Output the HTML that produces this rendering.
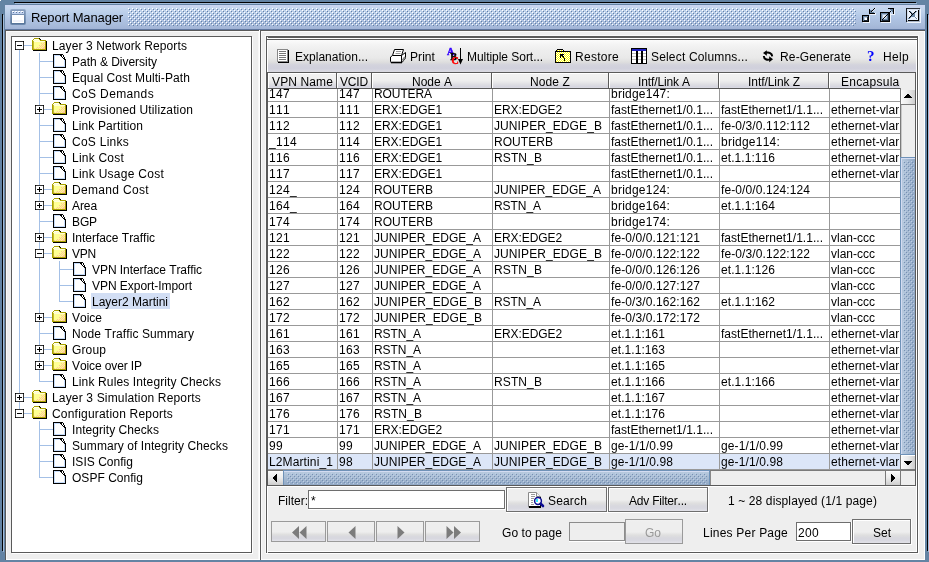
<!DOCTYPE html>
<html><head><meta charset="utf-8"><title>Report Manager</title>
<style>
html,body{margin:0;padding:0}
body{width:929px;height:562px;overflow:hidden;position:relative;background:#eee;font:12px/14px "Liberation Sans",sans-serif;color:#000;font-kerning:none}
div{position:absolute;box-sizing:border-box}
svg{position:absolute;overflow:visible}
.t{white-space:nowrap;height:14px;line-height:14px}
.c{white-space:nowrap;height:14px;line-height:14px;overflow:hidden}
.btn{border:1px solid #7a7a7a;background:linear-gradient(#fdfdfd 0%,#efefef 45%,#dcdce4 80%,#d2d2da 92%,#e4e4e8 100%);text-align:center}
.dis{border-color:#9c9c9c;color:#999}
</style></head><body><div id="root" style="left:0;top:0;width:929px;height:562px;overflow:hidden;will-change:transform">

<div style="left:0px;top:0px;width:930px;height:565px;border:5px solid #6484a4"></div>
<div style="left:14px;top:2px;width:902px;height:1px;background:#000"></div>
<div style="left:15px;top:3px;width:902px;height:1px;background:#a3bbd8"></div>
<div style="left:2px;top:14px;width:1px;height:537px;background:#000"></div>
<div style="left:3px;top:15px;width:1px;height:537px;background:#a3bbd8"></div>
<div style="left:927px;top:14px;width:1px;height:537px;background:#000"></div>
<div style="left:928px;top:15px;width:1px;height:537px;background:#a3bbd8"></div>
<div style="left:0px;top:0px;width:1px;height:1px;background:#fff"></div>
<div style="left:5px;top:5px;width:920px;height:25px;background:linear-gradient(#ccd4f2 0%,#c5d7ee 12%,#b6cbe8 40%,#adc1e1 60%,#a9bddc 76%,#a2b4d6 95.9%,#5f779f 96%,#5f779f 100%)"></div>
<div style="left:5px;top:30px;width:920px;height:1px;background:#5a5a5a"></div>
<svg style="left:128px;top:8px" width="728" height="18" shape-rendering="crispEdges"><defs><pattern id="bp" width="4" height="4" patternUnits="userSpaceOnUse"><rect x="0" y="0" width="1" height="1" fill="#fff"/><rect x="2" y="2" width="1" height="1" fill="#fff"/><rect x="1" y="1" width="1" height="1" fill="#6480a4"/><rect x="3" y="3" width="1" height="1" fill="#6480a4"/></pattern></defs><rect width="728" height="18" fill="url(#bp)"/></svg>
<svg style="left:10px;top:9px" width="16" height="16" shape-rendering="crispEdges"><defs><linearGradient id="tig" x1="0" y1="0" x2="0" y2="1"><stop offset="0" stop-color="#869dbd"/><stop offset="1" stop-color="#56749a"/></linearGradient></defs><rect x="0" y="0" width="16" height="16" rx="2" fill="url(#tig)" shape-rendering="auto" opacity=".75"/><rect x="1" y="1" width="14" height="14" fill="url(#tig)"/><rect x="2" y="2" width="12" height="3" fill="#c2d2ee"/><g fill="#fff"><rect x="2" y="2" width="2" height="1"/><rect x="5" y="2" width="2" height="1"/><rect x="8" y="2" width="2" height="1"/><rect x="11" y="2" width="2" height="1"/></g><g fill="#5f7b9f"><rect x="3" y="3" width="1" height="1"/><rect x="6" y="3" width="1" height="1"/><rect x="9" y="3" width="1" height="1"/><rect x="12" y="3" width="1" height="1"/></g><rect x="2" y="6" width="12" height="8" fill="#fff"/><rect x="3" y="11" width="10" height="2" fill="#f0f2fb"/></svg>
<div class="t" style="left:31px;top:10px;font-size:13px;height:15px;line-height:15px;letter-spacing:-0.138px">Report Manager</div>
<svg style="left:0;top:0" width="929" height="30" shape-rendering="crispEdges"><rect x="862" y="15" width="7" height="7" fill="#000"/><rect x="863" y="16" width="5" height="5" fill="#66829f"/><rect x="864" y="17" width="3" height="3" fill="#b9cadf"/><rect x="865" y="18" width="2" height="2" fill="#fff"/><rect x="867" y="17" width="1" height="4" fill="#1c2836"/><rect x="864" y="20" width="4" height="1" fill="#1c2836"/><rect x="863" y="22" width="7" height="1" fill="#eef3fb"/><rect x="869" y="16" width="1" height="7" fill="#eef3fb"/><rect x="869" y="9" width="1" height="5" fill="#000"/><rect x="869" y="13" width="6" height="1" fill="#000"/><rect x="870" y="10" width="2" height="1" fill="#5f7b98"/><rect x="870" y="11" width="3" height="1" fill="#5f7b98"/><rect x="870" y="12" width="4" height="1" fill="#5f7b98"/><rect x="871" y="11" width="1" height="1" fill="#000"/><rect x="872" y="10" width="1" height="1" fill="#000"/><rect x="873" y="9" width="1" height="1" fill="#000"/><rect x="874" y="8" width="1" height="1" fill="#000"/><rect x="870" y="14" width="6" height="1" fill="#eef3fb"/><rect x="875" y="13" width="1" height="1" fill="#eef3fb"/><rect x="872" y="11" width="1" height="1" fill="#dfe8f5"/><rect x="873" y="10" width="1" height="1" fill="#dfe8f5"/><rect x="874" y="9" width="1" height="1" fill="#dfe8f5"/><rect x="875" y="8" width="1" height="1" fill="#dfe8f5"/><rect x="880" y="12" width="10" height="10" fill="#000"/><rect x="881" y="13" width="8" height="8" fill="#66829f"/><rect x="882" y="14" width="5" height="5" fill="#a9bdd6"/><rect x="883" y="15" width="3" height="3" fill="#e6eef8"/><rect x="888" y="14" width="1" height="7" fill="#1c2836"/><rect x="882" y="20" width="7" height="1" fill="#1c2836"/><rect x="881" y="22" width="10" height="1" fill="#eef3fb"/><rect x="890" y="13" width="1" height="10" fill="#eef3fb"/><rect x="882" y="19" width="1" height="1" fill="#000"/><rect x="883" y="18" width="1" height="1" fill="#000"/><rect x="884" y="17" width="1" height="1" fill="#000"/><rect x="885" y="16" width="1" height="1" fill="#000"/><rect x="886" y="15" width="1" height="1" fill="#000"/><rect x="887" y="14" width="1" height="1" fill="#000"/><rect x="888" y="13" width="1" height="1" fill="#000"/><rect x="889" y="12" width="1" height="1" fill="#000"/><rect x="890" y="11" width="1" height="1" fill="#000"/><rect x="891" y="10" width="1" height="1" fill="#000"/><rect x="892" y="9" width="1" height="1" fill="#000"/><rect x="884" y="18" width="1" height="1" fill="#dfe8f5"/><rect x="885" y="17" width="1" height="1" fill="#dfe8f5"/><rect x="886" y="16" width="1" height="1" fill="#dfe8f5"/><rect x="888" y="8" width="6" height="1" fill="#000"/><rect x="893" y="8" width="1" height="6" fill="#000"/><rect x="890" y="9" width="3" height="1" fill="#5f7b98"/><rect x="891" y="10" width="2" height="1" fill="#5f7b98"/><rect x="892" y="11" width="1" height="1" fill="#5f7b98"/><rect x="894" y="9" width="1" height="6" fill="#eef3fb"/><rect x="891" y="14" width="3" height="1" fill="#eef3fb"/><rect x="906" y="8" width="14" height="14" fill="#a8b4c6"/><rect x="906" y="8" width="14" height="1" fill="#2a2e36"/><rect x="906" y="8" width="1" height="14" fill="#14181e"/><rect x="907" y="9" width="12" height="12" fill="#d2deee"/><rect x="908" y="10" width="10" height="10" fill="#e9f0fa"/><rect x="918" y="10" width="1" height="11" fill="#000"/><rect x="908" y="20" width="11" height="1" fill="#000"/><rect x="907" y="22" width="14" height="1" fill="#eef3fb"/><rect x="920" y="9" width="1" height="14" fill="#eef3fb"/><rect x="909" y="11" width="2" height="1" fill="#6a86a3"/><rect x="915" y="11" width="2" height="1" fill="#6a86a3"/><rect x="910" y="12" width="2" height="1" fill="#6a86a3"/><rect x="914" y="12" width="2" height="1" fill="#6a86a3"/><rect x="911" y="13" width="2" height="1" fill="#6a86a3"/><rect x="913" y="13" width="2" height="1" fill="#6a86a3"/><rect x="912" y="14" width="2" height="1" fill="#6a86a3"/><rect x="912" y="14" width="2" height="1" fill="#6a86a3"/><rect x="913" y="15" width="2" height="1" fill="#6a86a3"/><rect x="911" y="15" width="2" height="1" fill="#6a86a3"/><rect x="914" y="16" width="2" height="1" fill="#6a86a3"/><rect x="910" y="16" width="2" height="1" fill="#6a86a3"/><rect x="915" y="17" width="2" height="1" fill="#6a86a3"/><rect x="909" y="17" width="2" height="1" fill="#6a86a3"/><rect x="916" y="18" width="2" height="1" fill="#6a86a3"/><rect x="908" y="18" width="2" height="1" fill="#6a86a3"/><rect x="911" y="13" width="4" height="4" fill="#6a86a3"/><rect x="909" y="11" width="1" height="1" fill="#000"/><rect x="910" y="12" width="1" height="1" fill="#000"/><rect x="911" y="13" width="1" height="1" fill="#000"/><rect x="912" y="14" width="1" height="1" fill="#000"/><rect x="915" y="11" width="1" height="1" fill="#000"/><rect x="914" y="12" width="1" height="1" fill="#000"/><rect x="913" y="13" width="1" height="1" fill="#000"/><rect x="912" y="14" width="1" height="1" fill="#000"/><rect x="911" y="15" width="1" height="1" fill="#000"/><rect x="910" y="16" width="1" height="1" fill="#000"/><rect x="909" y="17" width="1" height="1" fill="#000"/><rect x="915" y="16" width="1" height="1" fill="#fff"/><rect x="916" y="17" width="1" height="1" fill="#fff"/><rect x="917" y="18" width="1" height="1" fill="#fff"/></svg>
<div style="left:5px;top:30px;width:1px;height:530px;background:#5a5a5a"></div>
<div style="left:6px;top:31px;width:1px;height:529px;background:#fafafa"></div>
<div style="left:6px;top:31px;width:252px;height:1px;background:#fafafa"></div>
<div style="left:258px;top:31px;width:1px;height:529px;background:#f8f8f8"></div>
<div style="left:259px;top:30px;width:1px;height:530px;background:#fff"></div>
<div style="left:260px;top:30px;width:1px;height:530px;background:#5a5a5a"></div>
<div style="left:261px;top:31px;width:1px;height:529px;background:#fafafa"></div>
<div style="left:261px;top:31px;width:664px;height:1px;background:#fafafa"></div>
<div style="left:924px;top:31px;width:1px;height:529px;background:#fff"></div>
<div style="left:6px;top:559px;width:919px;height:1px;background:#fff"></div>
<div style="left:260px;top:30px;width:1px;height:530px;background:#5a5a5a"></div>
<div style="left:11px;top:36px;width:241px;height:517px;border:1px solid #5a5a5a;background:#fff"></div>
<div style="left:252px;top:37px;width:1px;height:517px;background:#fff"></div>
<div style="left:12px;top:553px;width:241px;height:1px;background:#fff"></div>
<div style="left:19px;top:50px;width:1px;height:359px;background:#a4c0e6"></div>
<div style="left:39px;top:53px;width:1px;height:329px;background:#a4c0e6"></div>
<div style="left:59px;top:261px;width:1px;height:41px;background:#a4c0e6"></div>
<div style="left:39px;top:421px;width:1px;height:57px;background:#a4c0e6"></div>
<div style="left:24px;top:45px;width:8px;height:1px;background:#a4c0e6"></div>
<svg style="left:15px;top:41px" width="9" height="9" shape-rendering="crispEdges"><rect x="0" y="0" width="9" height="9" fill="#383838"/><rect x="1" y="1" width="7" height="7" fill="#fff"/><rect x="0" y="0" width="1" height="1" fill="#000"/><rect x="8" y="0" width="1" height="1" fill="#000"/><rect x="0" y="8" width="1" height="1" fill="#000"/><rect x="8" y="8" width="1" height="1" fill="#000"/><rect x="2" y="4" width="5" height="1" fill="#000"/></svg>
<svg style="left:32px;top:38px" width="15" height="13" shape-rendering="crispEdges"><rect x="2" y="0" width="5" height="1" fill="#aaa200"/><rect x="7" y="0" width="1" height="1" fill="#000"/><rect x="8" y="1" width="1" height="1" fill="#000"/><rect x="1" y="1" width="1" height="1" fill="#aaa200"/><rect x="2" y="1" width="5" height="1" fill="#fffff0"/><rect x="7" y="1" width="1" height="1" fill="#aaa200"/><rect x="0" y="2" width="14" height="1" fill="#aaa200"/><rect x="1" y="2" width="7" height="1" fill="#ffffc8"/><rect x="0" y="3" width="14" height="9" fill="#aaa200"/><rect x="1" y="3" width="1" height="8" fill="#c4bc30"/><rect x="2" y="3" width="11" height="8" fill="#ffff94"/><rect x="2" y="3" width="11" height="1" fill="#ffffd8"/><rect x="14" y="3" width="1" height="9" fill="#000"/><rect x="1" y="12" width="14" height="1" fill="#000"/><rect x="12" y="4" width="1" height="1" fill="#ffc896"/><rect x="9" y="5" width="1" height="1" fill="#ffc896"/><rect x="11" y="5" width="1" height="1" fill="#ffc896"/><rect x="10" y="6" width="1" height="1" fill="#ffc896"/><rect x="12" y="6" width="1" height="1" fill="#ffc896"/><rect x="7" y="7" width="1" height="1" fill="#ffc896"/><rect x="9" y="7" width="1" height="1" fill="#ffc896"/><rect x="11" y="7" width="1" height="1" fill="#ffc896"/><rect x="8" y="8" width="1" height="1" fill="#ffc896"/><rect x="10" y="8" width="1" height="1" fill="#ffc896"/><rect x="12" y="8" width="1" height="1" fill="#ffc896"/><rect x="5" y="9" width="1" height="1" fill="#ffc896"/><rect x="7" y="9" width="1" height="1" fill="#ffc896"/><rect x="9" y="9" width="1" height="1" fill="#ffc896"/><rect x="11" y="9" width="1" height="1" fill="#ffc896"/><rect x="12" y="9" width="1" height="1" fill="#ffc896"/><rect x="2" y="10" width="1" height="1" fill="#ffc896"/><rect x="4" y="10" width="1" height="1" fill="#ffc896"/><rect x="6" y="10" width="1" height="1" fill="#ffc896"/><rect x="8" y="10" width="1" height="1" fill="#ffc896"/><rect x="10" y="10" width="1" height="1" fill="#ffc896"/><rect x="11" y="10" width="1" height="1" fill="#ffc896"/><rect x="12" y="10" width="1" height="1" fill="#ffc896"/></svg>
<div class="t" style="left:52px;top:39px;letter-spacing:0.099px;">Layer 3 Network Reports</div>
<div style="left:39px;top:61px;width:14px;height:1px;background:#a4c0e6"></div>
<svg style="left:53px;top:54px" width="13" height="14" shape-rendering="crispEdges"><path d="M0 0 H10 L13 5 V14 H0 Z" fill="#fff"/><rect x="1" y="1" width="1" height="12" fill="#c6dcfa"/><rect x="1" y="12" width="11" height="1" fill="#c6dcfa"/><rect x="1" y="1" width="7" height="1" fill="#c6dcfa"/><rect x="11" y="6" width="1" height="7" fill="#c6dcfa"/><rect x="0" y="0" width="10" height="1" fill="#000"/><rect x="0" y="0" width="1" height="14" fill="#000"/><rect x="0" y="13" width="13" height="1" fill="#000"/><rect x="12" y="6" width="1" height="8" fill="#000"/><rect x="10" y="1" width="1" height="1" fill="#000"/><rect x="10" y="2" width="1" height="1" fill="#000"/><rect x="11" y="3" width="1" height="1" fill="#000"/><rect x="11" y="4" width="1" height="1" fill="#000"/><rect x="12" y="5" width="1" height="1" fill="#000"/><rect x="7" y="1" width="1" height="1" fill="#000"/><rect x="8" y="2" width="1" height="1" fill="#000"/><rect x="9" y="3" width="1" height="1" fill="#000"/><rect x="10" y="4" width="1" height="1" fill="#000"/><rect x="11" y="5" width="1" height="1" fill="#000"/><rect x="8" y="1" width="1" height="1" fill="#000"/></svg>
<div class="t" style="left:72px;top:55px;letter-spacing:-0.022px;">Path &amp; Diversity</div>
<div style="left:39px;top:77px;width:14px;height:1px;background:#a4c0e6"></div>
<svg style="left:53px;top:70px" width="13" height="14" shape-rendering="crispEdges"><path d="M0 0 H10 L13 5 V14 H0 Z" fill="#fff"/><rect x="1" y="1" width="1" height="12" fill="#c6dcfa"/><rect x="1" y="12" width="11" height="1" fill="#c6dcfa"/><rect x="1" y="1" width="7" height="1" fill="#c6dcfa"/><rect x="11" y="6" width="1" height="7" fill="#c6dcfa"/><rect x="0" y="0" width="10" height="1" fill="#000"/><rect x="0" y="0" width="1" height="14" fill="#000"/><rect x="0" y="13" width="13" height="1" fill="#000"/><rect x="12" y="6" width="1" height="8" fill="#000"/><rect x="10" y="1" width="1" height="1" fill="#000"/><rect x="10" y="2" width="1" height="1" fill="#000"/><rect x="11" y="3" width="1" height="1" fill="#000"/><rect x="11" y="4" width="1" height="1" fill="#000"/><rect x="12" y="5" width="1" height="1" fill="#000"/><rect x="7" y="1" width="1" height="1" fill="#000"/><rect x="8" y="2" width="1" height="1" fill="#000"/><rect x="9" y="3" width="1" height="1" fill="#000"/><rect x="10" y="4" width="1" height="1" fill="#000"/><rect x="11" y="5" width="1" height="1" fill="#000"/><rect x="8" y="1" width="1" height="1" fill="#000"/></svg>
<div class="t" style="left:72px;top:71px;letter-spacing:0.093px;">Equal Cost Multi-Path</div>
<div style="left:39px;top:93px;width:14px;height:1px;background:#a4c0e6"></div>
<svg style="left:53px;top:86px" width="13" height="14" shape-rendering="crispEdges"><path d="M0 0 H10 L13 5 V14 H0 Z" fill="#fff"/><rect x="1" y="1" width="1" height="12" fill="#c6dcfa"/><rect x="1" y="12" width="11" height="1" fill="#c6dcfa"/><rect x="1" y="1" width="7" height="1" fill="#c6dcfa"/><rect x="11" y="6" width="1" height="7" fill="#c6dcfa"/><rect x="0" y="0" width="10" height="1" fill="#000"/><rect x="0" y="0" width="1" height="14" fill="#000"/><rect x="0" y="13" width="13" height="1" fill="#000"/><rect x="12" y="6" width="1" height="8" fill="#000"/><rect x="10" y="1" width="1" height="1" fill="#000"/><rect x="10" y="2" width="1" height="1" fill="#000"/><rect x="11" y="3" width="1" height="1" fill="#000"/><rect x="11" y="4" width="1" height="1" fill="#000"/><rect x="12" y="5" width="1" height="1" fill="#000"/><rect x="7" y="1" width="1" height="1" fill="#000"/><rect x="8" y="2" width="1" height="1" fill="#000"/><rect x="9" y="3" width="1" height="1" fill="#000"/><rect x="10" y="4" width="1" height="1" fill="#000"/><rect x="11" y="5" width="1" height="1" fill="#000"/><rect x="8" y="1" width="1" height="1" fill="#000"/></svg>
<div class="t" style="left:72px;top:87px;letter-spacing:0.36px;">CoS Demands</div>
<div style="left:44px;top:109px;width:8px;height:1px;background:#a4c0e6"></div>
<svg style="left:35px;top:105px" width="9" height="9" shape-rendering="crispEdges"><rect x="0" y="0" width="9" height="9" fill="#383838"/><rect x="1" y="1" width="7" height="7" fill="#fff"/><rect x="0" y="0" width="1" height="1" fill="#000"/><rect x="8" y="0" width="1" height="1" fill="#000"/><rect x="0" y="8" width="1" height="1" fill="#000"/><rect x="8" y="8" width="1" height="1" fill="#000"/><rect x="2" y="4" width="5" height="1" fill="#000"/><rect x="4" y="2" width="1" height="5" fill="#000"/></svg>
<svg style="left:52px;top:102px" width="15" height="13" shape-rendering="crispEdges"><rect x="2" y="0" width="5" height="1" fill="#aaa200"/><rect x="7" y="0" width="1" height="1" fill="#000"/><rect x="8" y="1" width="1" height="1" fill="#000"/><rect x="1" y="1" width="1" height="1" fill="#aaa200"/><rect x="2" y="1" width="5" height="1" fill="#fffff0"/><rect x="7" y="1" width="1" height="1" fill="#aaa200"/><rect x="0" y="2" width="14" height="1" fill="#aaa200"/><rect x="1" y="2" width="7" height="1" fill="#ffffc8"/><rect x="0" y="3" width="14" height="9" fill="#aaa200"/><rect x="1" y="3" width="1" height="8" fill="#c4bc30"/><rect x="2" y="3" width="11" height="8" fill="#ffff94"/><rect x="2" y="3" width="11" height="1" fill="#ffffd8"/><rect x="14" y="3" width="1" height="9" fill="#000"/><rect x="1" y="12" width="14" height="1" fill="#000"/><rect x="12" y="4" width="1" height="1" fill="#ffc896"/><rect x="9" y="5" width="1" height="1" fill="#ffc896"/><rect x="11" y="5" width="1" height="1" fill="#ffc896"/><rect x="10" y="6" width="1" height="1" fill="#ffc896"/><rect x="12" y="6" width="1" height="1" fill="#ffc896"/><rect x="7" y="7" width="1" height="1" fill="#ffc896"/><rect x="9" y="7" width="1" height="1" fill="#ffc896"/><rect x="11" y="7" width="1" height="1" fill="#ffc896"/><rect x="8" y="8" width="1" height="1" fill="#ffc896"/><rect x="10" y="8" width="1" height="1" fill="#ffc896"/><rect x="12" y="8" width="1" height="1" fill="#ffc896"/><rect x="5" y="9" width="1" height="1" fill="#ffc896"/><rect x="7" y="9" width="1" height="1" fill="#ffc896"/><rect x="9" y="9" width="1" height="1" fill="#ffc896"/><rect x="11" y="9" width="1" height="1" fill="#ffc896"/><rect x="12" y="9" width="1" height="1" fill="#ffc896"/><rect x="2" y="10" width="1" height="1" fill="#ffc896"/><rect x="4" y="10" width="1" height="1" fill="#ffc896"/><rect x="6" y="10" width="1" height="1" fill="#ffc896"/><rect x="8" y="10" width="1" height="1" fill="#ffc896"/><rect x="10" y="10" width="1" height="1" fill="#ffc896"/><rect x="11" y="10" width="1" height="1" fill="#ffc896"/><rect x="12" y="10" width="1" height="1" fill="#ffc896"/></svg>
<div class="t" style="left:72px;top:103px;letter-spacing:0.128px;">Provisioned Utilization</div>
<div style="left:39px;top:125px;width:14px;height:1px;background:#a4c0e6"></div>
<svg style="left:53px;top:118px" width="13" height="14" shape-rendering="crispEdges"><path d="M0 0 H10 L13 5 V14 H0 Z" fill="#fff"/><rect x="1" y="1" width="1" height="12" fill="#c6dcfa"/><rect x="1" y="12" width="11" height="1" fill="#c6dcfa"/><rect x="1" y="1" width="7" height="1" fill="#c6dcfa"/><rect x="11" y="6" width="1" height="7" fill="#c6dcfa"/><rect x="0" y="0" width="10" height="1" fill="#000"/><rect x="0" y="0" width="1" height="14" fill="#000"/><rect x="0" y="13" width="13" height="1" fill="#000"/><rect x="12" y="6" width="1" height="8" fill="#000"/><rect x="10" y="1" width="1" height="1" fill="#000"/><rect x="10" y="2" width="1" height="1" fill="#000"/><rect x="11" y="3" width="1" height="1" fill="#000"/><rect x="11" y="4" width="1" height="1" fill="#000"/><rect x="12" y="5" width="1" height="1" fill="#000"/><rect x="7" y="1" width="1" height="1" fill="#000"/><rect x="8" y="2" width="1" height="1" fill="#000"/><rect x="9" y="3" width="1" height="1" fill="#000"/><rect x="10" y="4" width="1" height="1" fill="#000"/><rect x="11" y="5" width="1" height="1" fill="#000"/><rect x="8" y="1" width="1" height="1" fill="#000"/></svg>
<div class="t" style="left:72px;top:119px;letter-spacing:0.116px;">Link Partition</div>
<div style="left:39px;top:141px;width:14px;height:1px;background:#a4c0e6"></div>
<svg style="left:53px;top:134px" width="13" height="14" shape-rendering="crispEdges"><path d="M0 0 H10 L13 5 V14 H0 Z" fill="#fff"/><rect x="1" y="1" width="1" height="12" fill="#c6dcfa"/><rect x="1" y="12" width="11" height="1" fill="#c6dcfa"/><rect x="1" y="1" width="7" height="1" fill="#c6dcfa"/><rect x="11" y="6" width="1" height="7" fill="#c6dcfa"/><rect x="0" y="0" width="10" height="1" fill="#000"/><rect x="0" y="0" width="1" height="14" fill="#000"/><rect x="0" y="13" width="13" height="1" fill="#000"/><rect x="12" y="6" width="1" height="8" fill="#000"/><rect x="10" y="1" width="1" height="1" fill="#000"/><rect x="10" y="2" width="1" height="1" fill="#000"/><rect x="11" y="3" width="1" height="1" fill="#000"/><rect x="11" y="4" width="1" height="1" fill="#000"/><rect x="12" y="5" width="1" height="1" fill="#000"/><rect x="7" y="1" width="1" height="1" fill="#000"/><rect x="8" y="2" width="1" height="1" fill="#000"/><rect x="9" y="3" width="1" height="1" fill="#000"/><rect x="10" y="4" width="1" height="1" fill="#000"/><rect x="11" y="5" width="1" height="1" fill="#000"/><rect x="8" y="1" width="1" height="1" fill="#000"/></svg>
<div class="t" style="left:72px;top:135px;letter-spacing:0.257px;">CoS Links</div>
<div style="left:39px;top:157px;width:14px;height:1px;background:#a4c0e6"></div>
<svg style="left:53px;top:150px" width="13" height="14" shape-rendering="crispEdges"><path d="M0 0 H10 L13 5 V14 H0 Z" fill="#fff"/><rect x="1" y="1" width="1" height="12" fill="#c6dcfa"/><rect x="1" y="12" width="11" height="1" fill="#c6dcfa"/><rect x="1" y="1" width="7" height="1" fill="#c6dcfa"/><rect x="11" y="6" width="1" height="7" fill="#c6dcfa"/><rect x="0" y="0" width="10" height="1" fill="#000"/><rect x="0" y="0" width="1" height="14" fill="#000"/><rect x="0" y="13" width="13" height="1" fill="#000"/><rect x="12" y="6" width="1" height="8" fill="#000"/><rect x="10" y="1" width="1" height="1" fill="#000"/><rect x="10" y="2" width="1" height="1" fill="#000"/><rect x="11" y="3" width="1" height="1" fill="#000"/><rect x="11" y="4" width="1" height="1" fill="#000"/><rect x="12" y="5" width="1" height="1" fill="#000"/><rect x="7" y="1" width="1" height="1" fill="#000"/><rect x="8" y="2" width="1" height="1" fill="#000"/><rect x="9" y="3" width="1" height="1" fill="#000"/><rect x="10" y="4" width="1" height="1" fill="#000"/><rect x="11" y="5" width="1" height="1" fill="#000"/><rect x="8" y="1" width="1" height="1" fill="#000"/></svg>
<div class="t" style="left:72px;top:151px;letter-spacing:0.22px;">Link Cost</div>
<div style="left:39px;top:173px;width:14px;height:1px;background:#a4c0e6"></div>
<svg style="left:53px;top:166px" width="13" height="14" shape-rendering="crispEdges"><path d="M0 0 H10 L13 5 V14 H0 Z" fill="#fff"/><rect x="1" y="1" width="1" height="12" fill="#c6dcfa"/><rect x="1" y="12" width="11" height="1" fill="#c6dcfa"/><rect x="1" y="1" width="7" height="1" fill="#c6dcfa"/><rect x="11" y="6" width="1" height="7" fill="#c6dcfa"/><rect x="0" y="0" width="10" height="1" fill="#000"/><rect x="0" y="0" width="1" height="14" fill="#000"/><rect x="0" y="13" width="13" height="1" fill="#000"/><rect x="12" y="6" width="1" height="8" fill="#000"/><rect x="10" y="1" width="1" height="1" fill="#000"/><rect x="10" y="2" width="1" height="1" fill="#000"/><rect x="11" y="3" width="1" height="1" fill="#000"/><rect x="11" y="4" width="1" height="1" fill="#000"/><rect x="12" y="5" width="1" height="1" fill="#000"/><rect x="7" y="1" width="1" height="1" fill="#000"/><rect x="8" y="2" width="1" height="1" fill="#000"/><rect x="9" y="3" width="1" height="1" fill="#000"/><rect x="10" y="4" width="1" height="1" fill="#000"/><rect x="11" y="5" width="1" height="1" fill="#000"/><rect x="8" y="1" width="1" height="1" fill="#000"/></svg>
<div class="t" style="left:72px;top:167px;letter-spacing:0.264px;">Link Usage Cost</div>
<div style="left:44px;top:189px;width:8px;height:1px;background:#a4c0e6"></div>
<svg style="left:35px;top:185px" width="9" height="9" shape-rendering="crispEdges"><rect x="0" y="0" width="9" height="9" fill="#383838"/><rect x="1" y="1" width="7" height="7" fill="#fff"/><rect x="0" y="0" width="1" height="1" fill="#000"/><rect x="8" y="0" width="1" height="1" fill="#000"/><rect x="0" y="8" width="1" height="1" fill="#000"/><rect x="8" y="8" width="1" height="1" fill="#000"/><rect x="2" y="4" width="5" height="1" fill="#000"/><rect x="4" y="2" width="1" height="5" fill="#000"/></svg>
<svg style="left:52px;top:182px" width="15" height="13" shape-rendering="crispEdges"><rect x="2" y="0" width="5" height="1" fill="#aaa200"/><rect x="7" y="0" width="1" height="1" fill="#000"/><rect x="8" y="1" width="1" height="1" fill="#000"/><rect x="1" y="1" width="1" height="1" fill="#aaa200"/><rect x="2" y="1" width="5" height="1" fill="#fffff0"/><rect x="7" y="1" width="1" height="1" fill="#aaa200"/><rect x="0" y="2" width="14" height="1" fill="#aaa200"/><rect x="1" y="2" width="7" height="1" fill="#ffffc8"/><rect x="0" y="3" width="14" height="9" fill="#aaa200"/><rect x="1" y="3" width="1" height="8" fill="#c4bc30"/><rect x="2" y="3" width="11" height="8" fill="#ffff94"/><rect x="2" y="3" width="11" height="1" fill="#ffffd8"/><rect x="14" y="3" width="1" height="9" fill="#000"/><rect x="1" y="12" width="14" height="1" fill="#000"/><rect x="12" y="4" width="1" height="1" fill="#ffc896"/><rect x="9" y="5" width="1" height="1" fill="#ffc896"/><rect x="11" y="5" width="1" height="1" fill="#ffc896"/><rect x="10" y="6" width="1" height="1" fill="#ffc896"/><rect x="12" y="6" width="1" height="1" fill="#ffc896"/><rect x="7" y="7" width="1" height="1" fill="#ffc896"/><rect x="9" y="7" width="1" height="1" fill="#ffc896"/><rect x="11" y="7" width="1" height="1" fill="#ffc896"/><rect x="8" y="8" width="1" height="1" fill="#ffc896"/><rect x="10" y="8" width="1" height="1" fill="#ffc896"/><rect x="12" y="8" width="1" height="1" fill="#ffc896"/><rect x="5" y="9" width="1" height="1" fill="#ffc896"/><rect x="7" y="9" width="1" height="1" fill="#ffc896"/><rect x="9" y="9" width="1" height="1" fill="#ffc896"/><rect x="11" y="9" width="1" height="1" fill="#ffc896"/><rect x="12" y="9" width="1" height="1" fill="#ffc896"/><rect x="2" y="10" width="1" height="1" fill="#ffc896"/><rect x="4" y="10" width="1" height="1" fill="#ffc896"/><rect x="6" y="10" width="1" height="1" fill="#ffc896"/><rect x="8" y="10" width="1" height="1" fill="#ffc896"/><rect x="10" y="10" width="1" height="1" fill="#ffc896"/><rect x="11" y="10" width="1" height="1" fill="#ffc896"/><rect x="12" y="10" width="1" height="1" fill="#ffc896"/></svg>
<div class="t" style="left:72px;top:183px;letter-spacing:0.33px;">Demand Cost</div>
<div style="left:44px;top:205px;width:8px;height:1px;background:#a4c0e6"></div>
<svg style="left:35px;top:201px" width="9" height="9" shape-rendering="crispEdges"><rect x="0" y="0" width="9" height="9" fill="#383838"/><rect x="1" y="1" width="7" height="7" fill="#fff"/><rect x="0" y="0" width="1" height="1" fill="#000"/><rect x="8" y="0" width="1" height="1" fill="#000"/><rect x="0" y="8" width="1" height="1" fill="#000"/><rect x="8" y="8" width="1" height="1" fill="#000"/><rect x="2" y="4" width="5" height="1" fill="#000"/><rect x="4" y="2" width="1" height="5" fill="#000"/></svg>
<svg style="left:52px;top:198px" width="15" height="13" shape-rendering="crispEdges"><rect x="2" y="0" width="5" height="1" fill="#aaa200"/><rect x="7" y="0" width="1" height="1" fill="#000"/><rect x="8" y="1" width="1" height="1" fill="#000"/><rect x="1" y="1" width="1" height="1" fill="#aaa200"/><rect x="2" y="1" width="5" height="1" fill="#fffff0"/><rect x="7" y="1" width="1" height="1" fill="#aaa200"/><rect x="0" y="2" width="14" height="1" fill="#aaa200"/><rect x="1" y="2" width="7" height="1" fill="#ffffc8"/><rect x="0" y="3" width="14" height="9" fill="#aaa200"/><rect x="1" y="3" width="1" height="8" fill="#c4bc30"/><rect x="2" y="3" width="11" height="8" fill="#ffff94"/><rect x="2" y="3" width="11" height="1" fill="#ffffd8"/><rect x="14" y="3" width="1" height="9" fill="#000"/><rect x="1" y="12" width="14" height="1" fill="#000"/><rect x="12" y="4" width="1" height="1" fill="#ffc896"/><rect x="9" y="5" width="1" height="1" fill="#ffc896"/><rect x="11" y="5" width="1" height="1" fill="#ffc896"/><rect x="10" y="6" width="1" height="1" fill="#ffc896"/><rect x="12" y="6" width="1" height="1" fill="#ffc896"/><rect x="7" y="7" width="1" height="1" fill="#ffc896"/><rect x="9" y="7" width="1" height="1" fill="#ffc896"/><rect x="11" y="7" width="1" height="1" fill="#ffc896"/><rect x="8" y="8" width="1" height="1" fill="#ffc896"/><rect x="10" y="8" width="1" height="1" fill="#ffc896"/><rect x="12" y="8" width="1" height="1" fill="#ffc896"/><rect x="5" y="9" width="1" height="1" fill="#ffc896"/><rect x="7" y="9" width="1" height="1" fill="#ffc896"/><rect x="9" y="9" width="1" height="1" fill="#ffc896"/><rect x="11" y="9" width="1" height="1" fill="#ffc896"/><rect x="12" y="9" width="1" height="1" fill="#ffc896"/><rect x="2" y="10" width="1" height="1" fill="#ffc896"/><rect x="4" y="10" width="1" height="1" fill="#ffc896"/><rect x="6" y="10" width="1" height="1" fill="#ffc896"/><rect x="8" y="10" width="1" height="1" fill="#ffc896"/><rect x="10" y="10" width="1" height="1" fill="#ffc896"/><rect x="11" y="10" width="1" height="1" fill="#ffc896"/><rect x="12" y="10" width="1" height="1" fill="#ffc896"/></svg>
<div class="t" style="left:72px;top:199px;letter-spacing:-0.087px;">Area</div>
<div style="left:39px;top:221px;width:14px;height:1px;background:#a4c0e6"></div>
<svg style="left:53px;top:214px" width="13" height="14" shape-rendering="crispEdges"><path d="M0 0 H10 L13 5 V14 H0 Z" fill="#fff"/><rect x="1" y="1" width="1" height="12" fill="#c6dcfa"/><rect x="1" y="12" width="11" height="1" fill="#c6dcfa"/><rect x="1" y="1" width="7" height="1" fill="#c6dcfa"/><rect x="11" y="6" width="1" height="7" fill="#c6dcfa"/><rect x="0" y="0" width="10" height="1" fill="#000"/><rect x="0" y="0" width="1" height="14" fill="#000"/><rect x="0" y="13" width="13" height="1" fill="#000"/><rect x="12" y="6" width="1" height="8" fill="#000"/><rect x="10" y="1" width="1" height="1" fill="#000"/><rect x="10" y="2" width="1" height="1" fill="#000"/><rect x="11" y="3" width="1" height="1" fill="#000"/><rect x="11" y="4" width="1" height="1" fill="#000"/><rect x="12" y="5" width="1" height="1" fill="#000"/><rect x="7" y="1" width="1" height="1" fill="#000"/><rect x="8" y="2" width="1" height="1" fill="#000"/><rect x="9" y="3" width="1" height="1" fill="#000"/><rect x="10" y="4" width="1" height="1" fill="#000"/><rect x="11" y="5" width="1" height="1" fill="#000"/><rect x="8" y="1" width="1" height="1" fill="#000"/></svg>
<div class="t" style="left:72px;top:215px;letter-spacing:-0.114px;">BGP</div>
<div style="left:44px;top:237px;width:8px;height:1px;background:#a4c0e6"></div>
<svg style="left:35px;top:233px" width="9" height="9" shape-rendering="crispEdges"><rect x="0" y="0" width="9" height="9" fill="#383838"/><rect x="1" y="1" width="7" height="7" fill="#fff"/><rect x="0" y="0" width="1" height="1" fill="#000"/><rect x="8" y="0" width="1" height="1" fill="#000"/><rect x="0" y="8" width="1" height="1" fill="#000"/><rect x="8" y="8" width="1" height="1" fill="#000"/><rect x="2" y="4" width="5" height="1" fill="#000"/><rect x="4" y="2" width="1" height="5" fill="#000"/></svg>
<svg style="left:52px;top:230px" width="15" height="13" shape-rendering="crispEdges"><rect x="2" y="0" width="5" height="1" fill="#aaa200"/><rect x="7" y="0" width="1" height="1" fill="#000"/><rect x="8" y="1" width="1" height="1" fill="#000"/><rect x="1" y="1" width="1" height="1" fill="#aaa200"/><rect x="2" y="1" width="5" height="1" fill="#fffff0"/><rect x="7" y="1" width="1" height="1" fill="#aaa200"/><rect x="0" y="2" width="14" height="1" fill="#aaa200"/><rect x="1" y="2" width="7" height="1" fill="#ffffc8"/><rect x="0" y="3" width="14" height="9" fill="#aaa200"/><rect x="1" y="3" width="1" height="8" fill="#c4bc30"/><rect x="2" y="3" width="11" height="8" fill="#ffff94"/><rect x="2" y="3" width="11" height="1" fill="#ffffd8"/><rect x="14" y="3" width="1" height="9" fill="#000"/><rect x="1" y="12" width="14" height="1" fill="#000"/><rect x="12" y="4" width="1" height="1" fill="#ffc896"/><rect x="9" y="5" width="1" height="1" fill="#ffc896"/><rect x="11" y="5" width="1" height="1" fill="#ffc896"/><rect x="10" y="6" width="1" height="1" fill="#ffc896"/><rect x="12" y="6" width="1" height="1" fill="#ffc896"/><rect x="7" y="7" width="1" height="1" fill="#ffc896"/><rect x="9" y="7" width="1" height="1" fill="#ffc896"/><rect x="11" y="7" width="1" height="1" fill="#ffc896"/><rect x="8" y="8" width="1" height="1" fill="#ffc896"/><rect x="10" y="8" width="1" height="1" fill="#ffc896"/><rect x="12" y="8" width="1" height="1" fill="#ffc896"/><rect x="5" y="9" width="1" height="1" fill="#ffc896"/><rect x="7" y="9" width="1" height="1" fill="#ffc896"/><rect x="9" y="9" width="1" height="1" fill="#ffc896"/><rect x="11" y="9" width="1" height="1" fill="#ffc896"/><rect x="12" y="9" width="1" height="1" fill="#ffc896"/><rect x="2" y="10" width="1" height="1" fill="#ffc896"/><rect x="4" y="10" width="1" height="1" fill="#ffc896"/><rect x="6" y="10" width="1" height="1" fill="#ffc896"/><rect x="8" y="10" width="1" height="1" fill="#ffc896"/><rect x="10" y="10" width="1" height="1" fill="#ffc896"/><rect x="11" y="10" width="1" height="1" fill="#ffc896"/><rect x="12" y="10" width="1" height="1" fill="#ffc896"/></svg>
<div class="t" style="left:72px;top:231px;letter-spacing:-0.021px;">Interface Traffic</div>
<div style="left:44px;top:253px;width:8px;height:1px;background:#a4c0e6"></div>
<svg style="left:35px;top:249px" width="9" height="9" shape-rendering="crispEdges"><rect x="0" y="0" width="9" height="9" fill="#383838"/><rect x="1" y="1" width="7" height="7" fill="#fff"/><rect x="0" y="0" width="1" height="1" fill="#000"/><rect x="8" y="0" width="1" height="1" fill="#000"/><rect x="0" y="8" width="1" height="1" fill="#000"/><rect x="8" y="8" width="1" height="1" fill="#000"/><rect x="2" y="4" width="5" height="1" fill="#000"/></svg>
<svg style="left:52px;top:246px" width="15" height="13" shape-rendering="crispEdges"><rect x="2" y="0" width="5" height="1" fill="#aaa200"/><rect x="7" y="0" width="1" height="1" fill="#000"/><rect x="8" y="1" width="1" height="1" fill="#000"/><rect x="1" y="1" width="1" height="1" fill="#aaa200"/><rect x="2" y="1" width="5" height="1" fill="#fffff0"/><rect x="7" y="1" width="1" height="1" fill="#aaa200"/><rect x="0" y="2" width="14" height="1" fill="#aaa200"/><rect x="1" y="2" width="7" height="1" fill="#ffffc8"/><rect x="0" y="3" width="14" height="9" fill="#aaa200"/><rect x="1" y="3" width="1" height="8" fill="#c4bc30"/><rect x="2" y="3" width="11" height="8" fill="#ffff94"/><rect x="2" y="3" width="11" height="1" fill="#ffffd8"/><rect x="14" y="3" width="1" height="9" fill="#000"/><rect x="1" y="12" width="14" height="1" fill="#000"/><rect x="12" y="4" width="1" height="1" fill="#ffc896"/><rect x="9" y="5" width="1" height="1" fill="#ffc896"/><rect x="11" y="5" width="1" height="1" fill="#ffc896"/><rect x="10" y="6" width="1" height="1" fill="#ffc896"/><rect x="12" y="6" width="1" height="1" fill="#ffc896"/><rect x="7" y="7" width="1" height="1" fill="#ffc896"/><rect x="9" y="7" width="1" height="1" fill="#ffc896"/><rect x="11" y="7" width="1" height="1" fill="#ffc896"/><rect x="8" y="8" width="1" height="1" fill="#ffc896"/><rect x="10" y="8" width="1" height="1" fill="#ffc896"/><rect x="12" y="8" width="1" height="1" fill="#ffc896"/><rect x="5" y="9" width="1" height="1" fill="#ffc896"/><rect x="7" y="9" width="1" height="1" fill="#ffc896"/><rect x="9" y="9" width="1" height="1" fill="#ffc896"/><rect x="11" y="9" width="1" height="1" fill="#ffc896"/><rect x="12" y="9" width="1" height="1" fill="#ffc896"/><rect x="2" y="10" width="1" height="1" fill="#ffc896"/><rect x="4" y="10" width="1" height="1" fill="#ffc896"/><rect x="6" y="10" width="1" height="1" fill="#ffc896"/><rect x="8" y="10" width="1" height="1" fill="#ffc896"/><rect x="10" y="10" width="1" height="1" fill="#ffc896"/><rect x="11" y="10" width="1" height="1" fill="#ffc896"/><rect x="12" y="10" width="1" height="1" fill="#ffc896"/></svg>
<div class="t" style="left:72px;top:247px;letter-spacing:-0.225px;">VPN</div>
<div style="left:59px;top:269px;width:14px;height:1px;background:#a4c0e6"></div>
<svg style="left:73px;top:262px" width="13" height="14" shape-rendering="crispEdges"><path d="M0 0 H10 L13 5 V14 H0 Z" fill="#fff"/><rect x="1" y="1" width="1" height="12" fill="#c6dcfa"/><rect x="1" y="12" width="11" height="1" fill="#c6dcfa"/><rect x="1" y="1" width="7" height="1" fill="#c6dcfa"/><rect x="11" y="6" width="1" height="7" fill="#c6dcfa"/><rect x="0" y="0" width="10" height="1" fill="#000"/><rect x="0" y="0" width="1" height="14" fill="#000"/><rect x="0" y="13" width="13" height="1" fill="#000"/><rect x="12" y="6" width="1" height="8" fill="#000"/><rect x="10" y="1" width="1" height="1" fill="#000"/><rect x="10" y="2" width="1" height="1" fill="#000"/><rect x="11" y="3" width="1" height="1" fill="#000"/><rect x="11" y="4" width="1" height="1" fill="#000"/><rect x="12" y="5" width="1" height="1" fill="#000"/><rect x="7" y="1" width="1" height="1" fill="#000"/><rect x="8" y="2" width="1" height="1" fill="#000"/><rect x="9" y="3" width="1" height="1" fill="#000"/><rect x="10" y="4" width="1" height="1" fill="#000"/><rect x="11" y="5" width="1" height="1" fill="#000"/><rect x="8" y="1" width="1" height="1" fill="#000"/></svg>
<div class="t" style="left:92px;top:263px;letter-spacing:-0.065px;">VPN Interface Traffic</div>
<div style="left:59px;top:285px;width:14px;height:1px;background:#a4c0e6"></div>
<svg style="left:73px;top:278px" width="13" height="14" shape-rendering="crispEdges"><path d="M0 0 H10 L13 5 V14 H0 Z" fill="#fff"/><rect x="1" y="1" width="1" height="12" fill="#c6dcfa"/><rect x="1" y="12" width="11" height="1" fill="#c6dcfa"/><rect x="1" y="1" width="7" height="1" fill="#c6dcfa"/><rect x="11" y="6" width="1" height="7" fill="#c6dcfa"/><rect x="0" y="0" width="10" height="1" fill="#000"/><rect x="0" y="0" width="1" height="14" fill="#000"/><rect x="0" y="13" width="13" height="1" fill="#000"/><rect x="12" y="6" width="1" height="8" fill="#000"/><rect x="10" y="1" width="1" height="1" fill="#000"/><rect x="10" y="2" width="1" height="1" fill="#000"/><rect x="11" y="3" width="1" height="1" fill="#000"/><rect x="11" y="4" width="1" height="1" fill="#000"/><rect x="12" y="5" width="1" height="1" fill="#000"/><rect x="7" y="1" width="1" height="1" fill="#000"/><rect x="8" y="2" width="1" height="1" fill="#000"/><rect x="9" y="3" width="1" height="1" fill="#000"/><rect x="10" y="4" width="1" height="1" fill="#000"/><rect x="11" y="5" width="1" height="1" fill="#000"/><rect x="8" y="1" width="1" height="1" fill="#000"/></svg>
<div class="t" style="left:92px;top:279px;letter-spacing:-0.041px;">VPN Export-Import</div>
<div style="left:59px;top:301px;width:14px;height:1px;background:#a4c0e6"></div>
<svg style="left:73px;top:294px" width="13" height="14" shape-rendering="crispEdges"><path d="M0 0 H10 L13 5 V14 H0 Z" fill="#fff"/><rect x="1" y="1" width="1" height="12" fill="#c6dcfa"/><rect x="1" y="12" width="11" height="1" fill="#c6dcfa"/><rect x="1" y="1" width="7" height="1" fill="#c6dcfa"/><rect x="11" y="6" width="1" height="7" fill="#c6dcfa"/><rect x="0" y="0" width="10" height="1" fill="#000"/><rect x="0" y="0" width="1" height="14" fill="#000"/><rect x="0" y="13" width="13" height="1" fill="#000"/><rect x="12" y="6" width="1" height="8" fill="#000"/><rect x="10" y="1" width="1" height="1" fill="#000"/><rect x="10" y="2" width="1" height="1" fill="#000"/><rect x="11" y="3" width="1" height="1" fill="#000"/><rect x="11" y="4" width="1" height="1" fill="#000"/><rect x="12" y="5" width="1" height="1" fill="#000"/><rect x="7" y="1" width="1" height="1" fill="#000"/><rect x="8" y="2" width="1" height="1" fill="#000"/><rect x="9" y="3" width="1" height="1" fill="#000"/><rect x="10" y="4" width="1" height="1" fill="#000"/><rect x="11" y="5" width="1" height="1" fill="#000"/><rect x="8" y="1" width="1" height="1" fill="#000"/></svg>
<div style="left:91px;top:293px;width:79px;height:16px;background:#d2def4"></div>
<div class="t" style="left:92px;top:295px;letter-spacing:-0.002px;">Layer2 Martini</div>
<div style="left:44px;top:317px;width:8px;height:1px;background:#a4c0e6"></div>
<svg style="left:35px;top:313px" width="9" height="9" shape-rendering="crispEdges"><rect x="0" y="0" width="9" height="9" fill="#383838"/><rect x="1" y="1" width="7" height="7" fill="#fff"/><rect x="0" y="0" width="1" height="1" fill="#000"/><rect x="8" y="0" width="1" height="1" fill="#000"/><rect x="0" y="8" width="1" height="1" fill="#000"/><rect x="8" y="8" width="1" height="1" fill="#000"/><rect x="2" y="4" width="5" height="1" fill="#000"/><rect x="4" y="2" width="1" height="5" fill="#000"/></svg>
<svg style="left:52px;top:310px" width="15" height="13" shape-rendering="crispEdges"><rect x="2" y="0" width="5" height="1" fill="#aaa200"/><rect x="7" y="0" width="1" height="1" fill="#000"/><rect x="8" y="1" width="1" height="1" fill="#000"/><rect x="1" y="1" width="1" height="1" fill="#aaa200"/><rect x="2" y="1" width="5" height="1" fill="#fffff0"/><rect x="7" y="1" width="1" height="1" fill="#aaa200"/><rect x="0" y="2" width="14" height="1" fill="#aaa200"/><rect x="1" y="2" width="7" height="1" fill="#ffffc8"/><rect x="0" y="3" width="14" height="9" fill="#aaa200"/><rect x="1" y="3" width="1" height="8" fill="#c4bc30"/><rect x="2" y="3" width="11" height="8" fill="#ffff94"/><rect x="2" y="3" width="11" height="1" fill="#ffffd8"/><rect x="14" y="3" width="1" height="9" fill="#000"/><rect x="1" y="12" width="14" height="1" fill="#000"/><rect x="12" y="4" width="1" height="1" fill="#ffc896"/><rect x="9" y="5" width="1" height="1" fill="#ffc896"/><rect x="11" y="5" width="1" height="1" fill="#ffc896"/><rect x="10" y="6" width="1" height="1" fill="#ffc896"/><rect x="12" y="6" width="1" height="1" fill="#ffc896"/><rect x="7" y="7" width="1" height="1" fill="#ffc896"/><rect x="9" y="7" width="1" height="1" fill="#ffc896"/><rect x="11" y="7" width="1" height="1" fill="#ffc896"/><rect x="8" y="8" width="1" height="1" fill="#ffc896"/><rect x="10" y="8" width="1" height="1" fill="#ffc896"/><rect x="12" y="8" width="1" height="1" fill="#ffc896"/><rect x="5" y="9" width="1" height="1" fill="#ffc896"/><rect x="7" y="9" width="1" height="1" fill="#ffc896"/><rect x="9" y="9" width="1" height="1" fill="#ffc896"/><rect x="11" y="9" width="1" height="1" fill="#ffc896"/><rect x="12" y="9" width="1" height="1" fill="#ffc896"/><rect x="2" y="10" width="1" height="1" fill="#ffc896"/><rect x="4" y="10" width="1" height="1" fill="#ffc896"/><rect x="6" y="10" width="1" height="1" fill="#ffc896"/><rect x="8" y="10" width="1" height="1" fill="#ffc896"/><rect x="10" y="10" width="1" height="1" fill="#ffc896"/><rect x="11" y="10" width="1" height="1" fill="#ffc896"/><rect x="12" y="10" width="1" height="1" fill="#ffc896"/></svg>
<div class="t" style="left:72px;top:311px;letter-spacing:-0.004px;">Voice</div>
<div style="left:39px;top:333px;width:14px;height:1px;background:#a4c0e6"></div>
<svg style="left:53px;top:326px" width="13" height="14" shape-rendering="crispEdges"><path d="M0 0 H10 L13 5 V14 H0 Z" fill="#fff"/><rect x="1" y="1" width="1" height="12" fill="#c6dcfa"/><rect x="1" y="12" width="11" height="1" fill="#c6dcfa"/><rect x="1" y="1" width="7" height="1" fill="#c6dcfa"/><rect x="11" y="6" width="1" height="7" fill="#c6dcfa"/><rect x="0" y="0" width="10" height="1" fill="#000"/><rect x="0" y="0" width="1" height="14" fill="#000"/><rect x="0" y="13" width="13" height="1" fill="#000"/><rect x="12" y="6" width="1" height="8" fill="#000"/><rect x="10" y="1" width="1" height="1" fill="#000"/><rect x="10" y="2" width="1" height="1" fill="#000"/><rect x="11" y="3" width="1" height="1" fill="#000"/><rect x="11" y="4" width="1" height="1" fill="#000"/><rect x="12" y="5" width="1" height="1" fill="#000"/><rect x="7" y="1" width="1" height="1" fill="#000"/><rect x="8" y="2" width="1" height="1" fill="#000"/><rect x="9" y="3" width="1" height="1" fill="#000"/><rect x="10" y="4" width="1" height="1" fill="#000"/><rect x="11" y="5" width="1" height="1" fill="#000"/><rect x="8" y="1" width="1" height="1" fill="#000"/></svg>
<div class="t" style="left:72px;top:327px;letter-spacing:0.099px;">Node Traffic Summary</div>
<div style="left:44px;top:349px;width:8px;height:1px;background:#a4c0e6"></div>
<svg style="left:35px;top:345px" width="9" height="9" shape-rendering="crispEdges"><rect x="0" y="0" width="9" height="9" fill="#383838"/><rect x="1" y="1" width="7" height="7" fill="#fff"/><rect x="0" y="0" width="1" height="1" fill="#000"/><rect x="8" y="0" width="1" height="1" fill="#000"/><rect x="0" y="8" width="1" height="1" fill="#000"/><rect x="8" y="8" width="1" height="1" fill="#000"/><rect x="2" y="4" width="5" height="1" fill="#000"/><rect x="4" y="2" width="1" height="5" fill="#000"/></svg>
<svg style="left:52px;top:342px" width="15" height="13" shape-rendering="crispEdges"><rect x="2" y="0" width="5" height="1" fill="#aaa200"/><rect x="7" y="0" width="1" height="1" fill="#000"/><rect x="8" y="1" width="1" height="1" fill="#000"/><rect x="1" y="1" width="1" height="1" fill="#aaa200"/><rect x="2" y="1" width="5" height="1" fill="#fffff0"/><rect x="7" y="1" width="1" height="1" fill="#aaa200"/><rect x="0" y="2" width="14" height="1" fill="#aaa200"/><rect x="1" y="2" width="7" height="1" fill="#ffffc8"/><rect x="0" y="3" width="14" height="9" fill="#aaa200"/><rect x="1" y="3" width="1" height="8" fill="#c4bc30"/><rect x="2" y="3" width="11" height="8" fill="#ffff94"/><rect x="2" y="3" width="11" height="1" fill="#ffffd8"/><rect x="14" y="3" width="1" height="9" fill="#000"/><rect x="1" y="12" width="14" height="1" fill="#000"/><rect x="12" y="4" width="1" height="1" fill="#ffc896"/><rect x="9" y="5" width="1" height="1" fill="#ffc896"/><rect x="11" y="5" width="1" height="1" fill="#ffc896"/><rect x="10" y="6" width="1" height="1" fill="#ffc896"/><rect x="12" y="6" width="1" height="1" fill="#ffc896"/><rect x="7" y="7" width="1" height="1" fill="#ffc896"/><rect x="9" y="7" width="1" height="1" fill="#ffc896"/><rect x="11" y="7" width="1" height="1" fill="#ffc896"/><rect x="8" y="8" width="1" height="1" fill="#ffc896"/><rect x="10" y="8" width="1" height="1" fill="#ffc896"/><rect x="12" y="8" width="1" height="1" fill="#ffc896"/><rect x="5" y="9" width="1" height="1" fill="#ffc896"/><rect x="7" y="9" width="1" height="1" fill="#ffc896"/><rect x="9" y="9" width="1" height="1" fill="#ffc896"/><rect x="11" y="9" width="1" height="1" fill="#ffc896"/><rect x="12" y="9" width="1" height="1" fill="#ffc896"/><rect x="2" y="10" width="1" height="1" fill="#ffc896"/><rect x="4" y="10" width="1" height="1" fill="#ffc896"/><rect x="6" y="10" width="1" height="1" fill="#ffc896"/><rect x="8" y="10" width="1" height="1" fill="#ffc896"/><rect x="10" y="10" width="1" height="1" fill="#ffc896"/><rect x="11" y="10" width="1" height="1" fill="#ffc896"/><rect x="12" y="10" width="1" height="1" fill="#ffc896"/></svg>
<div class="t" style="left:72px;top:343px;letter-spacing:0.13px;">Group</div>
<div style="left:44px;top:365px;width:8px;height:1px;background:#a4c0e6"></div>
<svg style="left:35px;top:361px" width="9" height="9" shape-rendering="crispEdges"><rect x="0" y="0" width="9" height="9" fill="#383838"/><rect x="1" y="1" width="7" height="7" fill="#fff"/><rect x="0" y="0" width="1" height="1" fill="#000"/><rect x="8" y="0" width="1" height="1" fill="#000"/><rect x="0" y="8" width="1" height="1" fill="#000"/><rect x="8" y="8" width="1" height="1" fill="#000"/><rect x="2" y="4" width="5" height="1" fill="#000"/><rect x="4" y="2" width="1" height="5" fill="#000"/></svg>
<svg style="left:52px;top:358px" width="15" height="13" shape-rendering="crispEdges"><rect x="2" y="0" width="5" height="1" fill="#aaa200"/><rect x="7" y="0" width="1" height="1" fill="#000"/><rect x="8" y="1" width="1" height="1" fill="#000"/><rect x="1" y="1" width="1" height="1" fill="#aaa200"/><rect x="2" y="1" width="5" height="1" fill="#fffff0"/><rect x="7" y="1" width="1" height="1" fill="#aaa200"/><rect x="0" y="2" width="14" height="1" fill="#aaa200"/><rect x="1" y="2" width="7" height="1" fill="#ffffc8"/><rect x="0" y="3" width="14" height="9" fill="#aaa200"/><rect x="1" y="3" width="1" height="8" fill="#c4bc30"/><rect x="2" y="3" width="11" height="8" fill="#ffff94"/><rect x="2" y="3" width="11" height="1" fill="#ffffd8"/><rect x="14" y="3" width="1" height="9" fill="#000"/><rect x="1" y="12" width="14" height="1" fill="#000"/><rect x="12" y="4" width="1" height="1" fill="#ffc896"/><rect x="9" y="5" width="1" height="1" fill="#ffc896"/><rect x="11" y="5" width="1" height="1" fill="#ffc896"/><rect x="10" y="6" width="1" height="1" fill="#ffc896"/><rect x="12" y="6" width="1" height="1" fill="#ffc896"/><rect x="7" y="7" width="1" height="1" fill="#ffc896"/><rect x="9" y="7" width="1" height="1" fill="#ffc896"/><rect x="11" y="7" width="1" height="1" fill="#ffc896"/><rect x="8" y="8" width="1" height="1" fill="#ffc896"/><rect x="10" y="8" width="1" height="1" fill="#ffc896"/><rect x="12" y="8" width="1" height="1" fill="#ffc896"/><rect x="5" y="9" width="1" height="1" fill="#ffc896"/><rect x="7" y="9" width="1" height="1" fill="#ffc896"/><rect x="9" y="9" width="1" height="1" fill="#ffc896"/><rect x="11" y="9" width="1" height="1" fill="#ffc896"/><rect x="12" y="9" width="1" height="1" fill="#ffc896"/><rect x="2" y="10" width="1" height="1" fill="#ffc896"/><rect x="4" y="10" width="1" height="1" fill="#ffc896"/><rect x="6" y="10" width="1" height="1" fill="#ffc896"/><rect x="8" y="10" width="1" height="1" fill="#ffc896"/><rect x="10" y="10" width="1" height="1" fill="#ffc896"/><rect x="11" y="10" width="1" height="1" fill="#ffc896"/><rect x="12" y="10" width="1" height="1" fill="#ffc896"/></svg>
<div class="t" style="left:72px;top:359px;letter-spacing:-0.105px;">Voice over IP</div>
<div style="left:39px;top:381px;width:14px;height:1px;background:#a4c0e6"></div>
<svg style="left:53px;top:374px" width="13" height="14" shape-rendering="crispEdges"><path d="M0 0 H10 L13 5 V14 H0 Z" fill="#fff"/><rect x="1" y="1" width="1" height="12" fill="#c6dcfa"/><rect x="1" y="12" width="11" height="1" fill="#c6dcfa"/><rect x="1" y="1" width="7" height="1" fill="#c6dcfa"/><rect x="11" y="6" width="1" height="7" fill="#c6dcfa"/><rect x="0" y="0" width="10" height="1" fill="#000"/><rect x="0" y="0" width="1" height="14" fill="#000"/><rect x="0" y="13" width="13" height="1" fill="#000"/><rect x="12" y="6" width="1" height="8" fill="#000"/><rect x="10" y="1" width="1" height="1" fill="#000"/><rect x="10" y="2" width="1" height="1" fill="#000"/><rect x="11" y="3" width="1" height="1" fill="#000"/><rect x="11" y="4" width="1" height="1" fill="#000"/><rect x="12" y="5" width="1" height="1" fill="#000"/><rect x="7" y="1" width="1" height="1" fill="#000"/><rect x="8" y="2" width="1" height="1" fill="#000"/><rect x="9" y="3" width="1" height="1" fill="#000"/><rect x="10" y="4" width="1" height="1" fill="#000"/><rect x="11" y="5" width="1" height="1" fill="#000"/><rect x="8" y="1" width="1" height="1" fill="#000"/></svg>
<div class="t" style="left:72px;top:375px;letter-spacing:0.134px;">Link Rules Integrity Checks</div>
<div style="left:24px;top:397px;width:8px;height:1px;background:#a4c0e6"></div>
<svg style="left:15px;top:393px" width="9" height="9" shape-rendering="crispEdges"><rect x="0" y="0" width="9" height="9" fill="#383838"/><rect x="1" y="1" width="7" height="7" fill="#fff"/><rect x="0" y="0" width="1" height="1" fill="#000"/><rect x="8" y="0" width="1" height="1" fill="#000"/><rect x="0" y="8" width="1" height="1" fill="#000"/><rect x="8" y="8" width="1" height="1" fill="#000"/><rect x="2" y="4" width="5" height="1" fill="#000"/><rect x="4" y="2" width="1" height="5" fill="#000"/></svg>
<svg style="left:32px;top:390px" width="15" height="13" shape-rendering="crispEdges"><rect x="2" y="0" width="5" height="1" fill="#aaa200"/><rect x="7" y="0" width="1" height="1" fill="#000"/><rect x="8" y="1" width="1" height="1" fill="#000"/><rect x="1" y="1" width="1" height="1" fill="#aaa200"/><rect x="2" y="1" width="5" height="1" fill="#fffff0"/><rect x="7" y="1" width="1" height="1" fill="#aaa200"/><rect x="0" y="2" width="14" height="1" fill="#aaa200"/><rect x="1" y="2" width="7" height="1" fill="#ffffc8"/><rect x="0" y="3" width="14" height="9" fill="#aaa200"/><rect x="1" y="3" width="1" height="8" fill="#c4bc30"/><rect x="2" y="3" width="11" height="8" fill="#ffff94"/><rect x="2" y="3" width="11" height="1" fill="#ffffd8"/><rect x="14" y="3" width="1" height="9" fill="#000"/><rect x="1" y="12" width="14" height="1" fill="#000"/><rect x="12" y="4" width="1" height="1" fill="#ffc896"/><rect x="9" y="5" width="1" height="1" fill="#ffc896"/><rect x="11" y="5" width="1" height="1" fill="#ffc896"/><rect x="10" y="6" width="1" height="1" fill="#ffc896"/><rect x="12" y="6" width="1" height="1" fill="#ffc896"/><rect x="7" y="7" width="1" height="1" fill="#ffc896"/><rect x="9" y="7" width="1" height="1" fill="#ffc896"/><rect x="11" y="7" width="1" height="1" fill="#ffc896"/><rect x="8" y="8" width="1" height="1" fill="#ffc896"/><rect x="10" y="8" width="1" height="1" fill="#ffc896"/><rect x="12" y="8" width="1" height="1" fill="#ffc896"/><rect x="5" y="9" width="1" height="1" fill="#ffc896"/><rect x="7" y="9" width="1" height="1" fill="#ffc896"/><rect x="9" y="9" width="1" height="1" fill="#ffc896"/><rect x="11" y="9" width="1" height="1" fill="#ffc896"/><rect x="12" y="9" width="1" height="1" fill="#ffc896"/><rect x="2" y="10" width="1" height="1" fill="#ffc896"/><rect x="4" y="10" width="1" height="1" fill="#ffc896"/><rect x="6" y="10" width="1" height="1" fill="#ffc896"/><rect x="8" y="10" width="1" height="1" fill="#ffc896"/><rect x="10" y="10" width="1" height="1" fill="#ffc896"/><rect x="11" y="10" width="1" height="1" fill="#ffc896"/><rect x="12" y="10" width="1" height="1" fill="#ffc896"/></svg>
<div class="t" style="left:52px;top:391px;letter-spacing:0.164px;">Layer 3 Simulation Reports</div>
<div style="left:24px;top:413px;width:8px;height:1px;background:#a4c0e6"></div>
<svg style="left:15px;top:409px" width="9" height="9" shape-rendering="crispEdges"><rect x="0" y="0" width="9" height="9" fill="#383838"/><rect x="1" y="1" width="7" height="7" fill="#fff"/><rect x="0" y="0" width="1" height="1" fill="#000"/><rect x="8" y="0" width="1" height="1" fill="#000"/><rect x="0" y="8" width="1" height="1" fill="#000"/><rect x="8" y="8" width="1" height="1" fill="#000"/><rect x="2" y="4" width="5" height="1" fill="#000"/></svg>
<svg style="left:32px;top:406px" width="15" height="13" shape-rendering="crispEdges"><rect x="2" y="0" width="5" height="1" fill="#aaa200"/><rect x="7" y="0" width="1" height="1" fill="#000"/><rect x="8" y="1" width="1" height="1" fill="#000"/><rect x="1" y="1" width="1" height="1" fill="#aaa200"/><rect x="2" y="1" width="5" height="1" fill="#fffff0"/><rect x="7" y="1" width="1" height="1" fill="#aaa200"/><rect x="0" y="2" width="14" height="1" fill="#aaa200"/><rect x="1" y="2" width="7" height="1" fill="#ffffc8"/><rect x="0" y="3" width="14" height="9" fill="#aaa200"/><rect x="1" y="3" width="1" height="8" fill="#c4bc30"/><rect x="2" y="3" width="11" height="8" fill="#ffff94"/><rect x="2" y="3" width="11" height="1" fill="#ffffd8"/><rect x="14" y="3" width="1" height="9" fill="#000"/><rect x="1" y="12" width="14" height="1" fill="#000"/><rect x="12" y="4" width="1" height="1" fill="#ffc896"/><rect x="9" y="5" width="1" height="1" fill="#ffc896"/><rect x="11" y="5" width="1" height="1" fill="#ffc896"/><rect x="10" y="6" width="1" height="1" fill="#ffc896"/><rect x="12" y="6" width="1" height="1" fill="#ffc896"/><rect x="7" y="7" width="1" height="1" fill="#ffc896"/><rect x="9" y="7" width="1" height="1" fill="#ffc896"/><rect x="11" y="7" width="1" height="1" fill="#ffc896"/><rect x="8" y="8" width="1" height="1" fill="#ffc896"/><rect x="10" y="8" width="1" height="1" fill="#ffc896"/><rect x="12" y="8" width="1" height="1" fill="#ffc896"/><rect x="5" y="9" width="1" height="1" fill="#ffc896"/><rect x="7" y="9" width="1" height="1" fill="#ffc896"/><rect x="9" y="9" width="1" height="1" fill="#ffc896"/><rect x="11" y="9" width="1" height="1" fill="#ffc896"/><rect x="12" y="9" width="1" height="1" fill="#ffc896"/><rect x="2" y="10" width="1" height="1" fill="#ffc896"/><rect x="4" y="10" width="1" height="1" fill="#ffc896"/><rect x="6" y="10" width="1" height="1" fill="#ffc896"/><rect x="8" y="10" width="1" height="1" fill="#ffc896"/><rect x="10" y="10" width="1" height="1" fill="#ffc896"/><rect x="11" y="10" width="1" height="1" fill="#ffc896"/><rect x="12" y="10" width="1" height="1" fill="#ffc896"/></svg>
<div class="t" style="left:52px;top:407px;letter-spacing:0.203px;">Configuration Reports</div>
<div style="left:39px;top:429px;width:14px;height:1px;background:#a4c0e6"></div>
<svg style="left:53px;top:422px" width="13" height="14" shape-rendering="crispEdges"><path d="M0 0 H10 L13 5 V14 H0 Z" fill="#fff"/><rect x="1" y="1" width="1" height="12" fill="#c6dcfa"/><rect x="1" y="12" width="11" height="1" fill="#c6dcfa"/><rect x="1" y="1" width="7" height="1" fill="#c6dcfa"/><rect x="11" y="6" width="1" height="7" fill="#c6dcfa"/><rect x="0" y="0" width="10" height="1" fill="#000"/><rect x="0" y="0" width="1" height="14" fill="#000"/><rect x="0" y="13" width="13" height="1" fill="#000"/><rect x="12" y="6" width="1" height="8" fill="#000"/><rect x="10" y="1" width="1" height="1" fill="#000"/><rect x="10" y="2" width="1" height="1" fill="#000"/><rect x="11" y="3" width="1" height="1" fill="#000"/><rect x="11" y="4" width="1" height="1" fill="#000"/><rect x="12" y="5" width="1" height="1" fill="#000"/><rect x="7" y="1" width="1" height="1" fill="#000"/><rect x="8" y="2" width="1" height="1" fill="#000"/><rect x="9" y="3" width="1" height="1" fill="#000"/><rect x="10" y="4" width="1" height="1" fill="#000"/><rect x="11" y="5" width="1" height="1" fill="#000"/><rect x="8" y="1" width="1" height="1" fill="#000"/></svg>
<div class="t" style="left:72px;top:423px;letter-spacing:0.06px;">Integrity Checks</div>
<div style="left:39px;top:445px;width:14px;height:1px;background:#a4c0e6"></div>
<svg style="left:53px;top:438px" width="13" height="14" shape-rendering="crispEdges"><path d="M0 0 H10 L13 5 V14 H0 Z" fill="#fff"/><rect x="1" y="1" width="1" height="12" fill="#c6dcfa"/><rect x="1" y="12" width="11" height="1" fill="#c6dcfa"/><rect x="1" y="1" width="7" height="1" fill="#c6dcfa"/><rect x="11" y="6" width="1" height="7" fill="#c6dcfa"/><rect x="0" y="0" width="10" height="1" fill="#000"/><rect x="0" y="0" width="1" height="14" fill="#000"/><rect x="0" y="13" width="13" height="1" fill="#000"/><rect x="12" y="6" width="1" height="8" fill="#000"/><rect x="10" y="1" width="1" height="1" fill="#000"/><rect x="10" y="2" width="1" height="1" fill="#000"/><rect x="11" y="3" width="1" height="1" fill="#000"/><rect x="11" y="4" width="1" height="1" fill="#000"/><rect x="12" y="5" width="1" height="1" fill="#000"/><rect x="7" y="1" width="1" height="1" fill="#000"/><rect x="8" y="2" width="1" height="1" fill="#000"/><rect x="9" y="3" width="1" height="1" fill="#000"/><rect x="10" y="4" width="1" height="1" fill="#000"/><rect x="11" y="5" width="1" height="1" fill="#000"/><rect x="8" y="1" width="1" height="1" fill="#000"/></svg>
<div class="t" style="left:72px;top:439px;letter-spacing:0.072px;">Summary of Integrity Checks</div>
<div style="left:39px;top:461px;width:14px;height:1px;background:#a4c0e6"></div>
<svg style="left:53px;top:454px" width="13" height="14" shape-rendering="crispEdges"><path d="M0 0 H10 L13 5 V14 H0 Z" fill="#fff"/><rect x="1" y="1" width="1" height="12" fill="#c6dcfa"/><rect x="1" y="12" width="11" height="1" fill="#c6dcfa"/><rect x="1" y="1" width="7" height="1" fill="#c6dcfa"/><rect x="11" y="6" width="1" height="7" fill="#c6dcfa"/><rect x="0" y="0" width="10" height="1" fill="#000"/><rect x="0" y="0" width="1" height="14" fill="#000"/><rect x="0" y="13" width="13" height="1" fill="#000"/><rect x="12" y="6" width="1" height="8" fill="#000"/><rect x="10" y="1" width="1" height="1" fill="#000"/><rect x="10" y="2" width="1" height="1" fill="#000"/><rect x="11" y="3" width="1" height="1" fill="#000"/><rect x="11" y="4" width="1" height="1" fill="#000"/><rect x="12" y="5" width="1" height="1" fill="#000"/><rect x="7" y="1" width="1" height="1" fill="#000"/><rect x="8" y="2" width="1" height="1" fill="#000"/><rect x="9" y="3" width="1" height="1" fill="#000"/><rect x="10" y="4" width="1" height="1" fill="#000"/><rect x="11" y="5" width="1" height="1" fill="#000"/><rect x="8" y="1" width="1" height="1" fill="#000"/></svg>
<div class="t" style="left:72px;top:455px;letter-spacing:0.028px;">ISIS Config</div>
<div style="left:39px;top:477px;width:14px;height:1px;background:#a4c0e6"></div>
<svg style="left:53px;top:470px" width="13" height="14" shape-rendering="crispEdges"><path d="M0 0 H10 L13 5 V14 H0 Z" fill="#fff"/><rect x="1" y="1" width="1" height="12" fill="#c6dcfa"/><rect x="1" y="12" width="11" height="1" fill="#c6dcfa"/><rect x="1" y="1" width="7" height="1" fill="#c6dcfa"/><rect x="11" y="6" width="1" height="7" fill="#c6dcfa"/><rect x="0" y="0" width="10" height="1" fill="#000"/><rect x="0" y="0" width="1" height="14" fill="#000"/><rect x="0" y="13" width="13" height="1" fill="#000"/><rect x="12" y="6" width="1" height="8" fill="#000"/><rect x="10" y="1" width="1" height="1" fill="#000"/><rect x="10" y="2" width="1" height="1" fill="#000"/><rect x="11" y="3" width="1" height="1" fill="#000"/><rect x="11" y="4" width="1" height="1" fill="#000"/><rect x="12" y="5" width="1" height="1" fill="#000"/><rect x="7" y="1" width="1" height="1" fill="#000"/><rect x="8" y="2" width="1" height="1" fill="#000"/><rect x="9" y="3" width="1" height="1" fill="#000"/><rect x="10" y="4" width="1" height="1" fill="#000"/><rect x="11" y="5" width="1" height="1" fill="#000"/><rect x="8" y="1" width="1" height="1" fill="#000"/></svg>
<div class="t" style="left:72px;top:471px;letter-spacing:0.028px;">OSPF Config</div>
<div style="left:265px;top:35px;width:654px;height:1px;background:#f8f8f8"></div>
<div style="left:265px;top:35px;width:1px;height:519px;background:#f8f8f8"></div>
<div style="left:266px;top:36px;width:652px;height:1px;background:#5a5a5a"></div>
<div style="left:268px;top:37px;width:650px;height:1px;background:#5a5a5a"></div>
<div style="left:267px;top:38px;width:650px;height:1px;background:#fff"></div>
<div style="left:266px;top:39px;width:652px;height:1px;background:#5a5a5a"></div>
<div style="left:266px;top:36px;width:1px;height:517px;background:#5a5a5a"></div>
<div style="left:917px;top:36px;width:1px;height:517px;background:#5a5a5a"></div>
<div style="left:268px;top:552px;width:650px;height:1px;background:#5a5a5a"></div>
<div style="left:918px;top:36px;width:1px;height:518px;background:#fff"></div>
<div style="left:266px;top:553px;width:653px;height:1px;background:#fff"></div>
<div style="left:916px;top:40px;width:1px;height:512px;background:#fff"></div>
<div style="left:267px;top:551px;width:650px;height:1px;background:#fff"></div>
<div style="left:267px;top:40px;width:1px;height:512px;background:#fff"></div>
<div style="left:268px;top:40px;width:648px;height:32px;background:linear-gradient(#fbfbfb 0%,#f3f3f3 16%,#eeeeee 31%,#e9e9e9 56%,#dedede 69%,#d3d3dc 78%,#d0d0dc 88%,#dadae2 100%)"></div>
<div style="left:267px;top:72px;width:649px;height:1px;background:#5a5a5a"></div>
<svg style="left:277px;top:49px" width="12" height="14" shape-rendering="crispEdges"><rect x="1" y="1" width="11" height="13" fill="#000"/><rect x="0" y="0" width="11" height="13" fill="#888"/><rect x="1" y="1" width="9" height="11" fill="#fff"/><rect x="2" y="2" width="7" height="1" fill="#777"/><rect x="2" y="4" width="7" height="1" fill="#777"/><rect x="2" y="6" width="7" height="1" fill="#777"/><rect x="2" y="8" width="7" height="1" fill="#777"/><rect x="2" y="10" width="7" height="1" fill="#777"/></svg>
<div class="t" style="left:295px;top:50px;letter-spacing:0.02px;">Explanation...</div>
<svg style="left:390px;top:49px" width="17" height="14"><path d="M4.5 0.5 H13.5 L11.5 6.5 H2.5 Z" fill="#fff" stroke="#000"/><path d="M6 2.5 H11 M5.5 4.5 H10.5" stroke="#999"/><path d="M2.5 6.5 H11.5 L15.5 3.5 V9 L12 13.5 H1.5 Q0.5 13.5 0.5 12.5 V8 Z" fill="#fff" stroke="#000"/><path d="M11.5 6.5 V13.5" stroke="#000"/><path d="M12.5 11.5 L15 8" stroke="#888" stroke-width="2"/><path d="M1 13.5 H12" stroke="#000" stroke-width="1.6"/></svg>
<div class="t" style="left:410px;top:50px;letter-spacing:0.065px;">Print</div>
<svg style="left:447px;top:48px" width="17" height="17"><g font-family="Liberation Serif,serif" font-weight="bold" font-size="10px" stroke-width=".45"><text x="0" y="7" fill="#3300ff" stroke="#3300ff">A</text><text x="3.3" y="12" fill="#000" stroke="#000">B</text><text x="4.6" y="16" fill="#ff0000" stroke="#ff0000" font-size="10px">C</text></g><path d="M13.5 0 V12" stroke="#000"/><path d="M11 11 H16 L13.5 16.5 Z" fill="#000"/></svg>
<div class="t" style="left:467px;top:50px;letter-spacing:-0.043px;">Multiple Sort...</div>
<svg style="left:555px;top:49px" width="16" height="14" shape-rendering="crispEdges"><defs><pattern id="yc" width="2" height="2" patternUnits="userSpaceOnUse"><rect width="2" height="2" fill="#ffff00"/><rect x="0" y="0" width="1" height="1" fill="#fff"/><rect x="1" y="1" width="1" height="1" fill="#fff"/></pattern></defs><rect x="2" y="0" width="6" height="1" fill="#000"/><rect x="1" y="1" width="1" height="1" fill="#000"/><rect x="8" y="1" width="1" height="1" fill="#000"/><rect x="2" y="1" width="6" height="1" fill="url(#yc)"/><rect x="0" y="2" width="16" height="12" fill="#000"/><rect x="1" y="3" width="14" height="10" fill="url(#yc)"/><rect x="5" y="5" width="4" height="1" fill="#000"/><rect x="5" y="5" width="1" height="4" fill="#000"/><rect x="6" y="6" width="2" height="1" fill="#000"/><rect x="7" y="7" width="1" height="1" fill="#000"/><rect x="8" y="8" width="1" height="1" fill="#000"/><rect x="9" y="9" width="1" height="3" fill="#000"/><rect x="8" y="7" width="1" height="1" fill="#000"/></svg>
<div class="t" style="left:575px;top:50px;letter-spacing:0.283px;">Restore</div>
<svg style="left:631px;top:48px" width="16" height="16" shape-rendering="crispEdges"><rect x="0" y="0" width="16" height="16" fill="#000"/><rect x="1" y="1" width="14" height="2" fill="#2020c0"/><rect x="1" y="3" width="14" height="12" fill="#fff"/><rect x="5" y="3" width="2" height="12" fill="#000"/><rect x="10" y="3" width="2" height="12" fill="#000"/><g fill="#bbb"><rect x="1" y="5" width="4" height="1"/><rect x="1" y="8" width="4" height="1"/><rect x="1" y="11" width="4" height="1"/><rect x="7" y="5" width="3" height="1"/><rect x="7" y="8" width="3" height="1"/><rect x="7" y="11" width="3" height="1"/><rect x="12" y="5" width="3" height="1"/><rect x="12" y="8" width="3" height="1"/><rect x="12" y="11" width="3" height="1"/></g></svg>
<div class="t" style="left:651px;top:50px;letter-spacing:0.174px;">Select Columns...</div>
<svg style="left:762px;top:50px" width="12" height="13"><path d="M1 3 L4.8 0.2 V5.8 Z" fill="#000"/><path d="M4 2.8 C7 2.2 10 3 10.2 6.4" fill="none" stroke="#000" stroke-width="2"/><path d="M11 9.2 L7.2 6.2 V12.2 Z" fill="#000"/><path d="M8 9.4 C5 10.2 2 9.4 1.8 6" fill="none" stroke="#000" stroke-width="2"/></svg>
<div class="t" style="left:780px;top:50px;letter-spacing:0.148px;">Re-Generate</div>
<div class="t" style="left:867px;top:47px;height:18px;font:bold 15px/18px 'Liberation Serif',serif;color:#0000ff">?</div>
<div class="t" style="left:883px;top:50px;letter-spacing:0.33px;">Help</div>
<div style="left:267px;top:72px;width:1px;height:414px;background:#5a5a5a"></div>
<div style="left:915px;top:72px;width:1px;height:414px;background:#5a5a5a"></div>
<div style="left:267px;top:485px;width:649px;height:1px;background:#5a5a5a"></div>
<div style="left:268px;top:73px;width:647px;height:16px;background:#eee"></div>
<div style="left:268px;top:73px;width:69px;height:15px;background:linear-gradient(#ffffff 0%,#ffffff 6%,#f1f1f1 8%,#eeeeee 50%,#e6e6e8 65%,#dcdce2 80%,#d6d6e0 92%,#dcdce4 100%);border-right:1px solid #5a5a5a;border-left:1px solid #fff;overflow:hidden"><div class="t" style="left:3px;top:2px;letter-spacing:0.123px">VPN Name</div></div>
<div style="left:337px;top:73px;width:35px;height:15px;background:linear-gradient(#ffffff 0%,#ffffff 6%,#f1f1f1 8%,#eeeeee 50%,#e6e6e8 65%,#dcdce2 80%,#d6d6e0 92%,#dcdce4 100%);border-right:1px solid #5a5a5a;border-left:1px solid #fff;overflow:hidden"><div class="t" style="left:2px;top:2px;letter-spacing:-0.167px">VCID</div></div>
<div style="left:372px;top:73px;width:120px;height:15px;background:linear-gradient(#ffffff 0%,#ffffff 6%,#f1f1f1 8%,#eeeeee 50%,#e6e6e8 65%,#dcdce2 80%,#d6d6e0 92%,#dcdce4 100%);border-right:1px solid #5a5a5a;border-left:1px solid #fff;overflow:hidden"><div class="t" style="left:39px;top:2px;letter-spacing:-0.004px">Node A</div></div>
<div style="left:492px;top:73px;width:117px;height:15px;background:linear-gradient(#ffffff 0%,#ffffff 6%,#f1f1f1 8%,#eeeeee 50%,#e6e6e8 65%,#dcdce2 80%,#d6d6e0 92%,#dcdce4 100%);border-right:1px solid #5a5a5a;border-left:1px solid #fff;overflow:hidden"><div class="t" style="left:37px;top:2px;letter-spacing:0.108px">Node Z</div></div>
<div style="left:609px;top:73px;width:110px;height:15px;background:linear-gradient(#ffffff 0%,#ffffff 6%,#f1f1f1 8%,#eeeeee 50%,#e6e6e8 65%,#dcdce2 80%,#d6d6e0 92%,#dcdce4 100%);border-right:1px solid #5a5a5a;border-left:1px solid #fff;overflow:hidden"><div class="t" style="left:28px;top:2px;letter-spacing:-0.124px">Intf/Link A</div></div>
<div style="left:719px;top:73px;width:110px;height:15px;background:linear-gradient(#ffffff 0%,#ffffff 6%,#f1f1f1 8%,#eeeeee 50%,#e6e6e8 65%,#dcdce2 80%,#d6d6e0 92%,#dcdce4 100%);border-right:1px solid #5a5a5a;border-left:1px solid #fff;overflow:hidden"><div class="t" style="left:28px;top:2px;letter-spacing:-0.062px">Intf/Link Z</div></div>
<div style="left:829px;top:73px;width:71px;height:15px;background:linear-gradient(#ffffff 0%,#ffffff 6%,#f1f1f1 8%,#eeeeee 50%,#e6e6e8 65%,#dcdce2 80%,#d6d6e0 92%,#dcdce4 100%);border-left:1px solid #fff;overflow:hidden"><div class="t" style="left:11px;top:2px;letter-spacing:0.278px;width:58px;overflow:hidden">Encapsulation</div></div>
<div style="left:268px;top:88px;width:632px;height:1px;background:#5a5a5a"></div>
<div style="left:268px;top:89px;width:632px;height:381px;background:#fff"></div>
<div style="left:900px;top:88px;width:1px;height:382px;background:#7a7a7a"></div>
<div style="left:268px;top:89px;width:632px;height:381px;overflow:hidden">
<div style="left:0px;top:365px;width:632px;height:15px;background:#dce6f8"></div>
<div style="left:0px;top:12px;width:632px;height:1px;background:#999"></div>
<div class="c" style="left:1px;top:-2px;width:67px;letter-spacing:0.326px">147</div>
<div class="c" style="left:71px;top:-2px;width:32px;letter-spacing:0.326px">147</div>
<div class="c" style="left:106px;top:-2px;width:117px;letter-spacing:-0.096px">ROUTERA</div>
<div class="c" style="left:343px;top:-2px;width:107px;letter-spacing:0.229px">bridge147:</div>
<div style="left:0px;top:28px;width:632px;height:1px;background:#999"></div>
<div class="c" style="left:1px;top:14px;width:67px;letter-spacing:0.326px">111</div>
<div class="c" style="left:71px;top:14px;width:32px;letter-spacing:0.326px">111</div>
<div class="c" style="left:106px;top:14px;width:117px;letter-spacing:-0.077px">ERX:EDGE1</div>
<div class="c" style="left:226px;top:14px;width:114px;letter-spacing:-0.077px">ERX:EDGE2</div>
<div class="c" style="left:343px;top:14px;width:107px;letter-spacing:0.03px">fastEthernet1/0.1...</div>
<div class="c" style="left:453px;top:14px;width:107px;letter-spacing:0.03px">fastEthernet1/1.1...</div>
<div class="c" style="left:563px;top:14px;width:68px;letter-spacing:0.074px">ethernet-vlan</div>
<div style="left:0px;top:44px;width:632px;height:1px;background:#999"></div>
<div class="c" style="left:1px;top:30px;width:67px;letter-spacing:0.326px">112</div>
<div class="c" style="left:71px;top:30px;width:32px;letter-spacing:0.326px">112</div>
<div class="c" style="left:106px;top:30px;width:117px;letter-spacing:-0.077px">ERX:EDGE1</div>
<div class="c" style="left:226px;top:30px;width:114px;letter-spacing:0.093px">JUNIPER_EDGE_B</div>
<div class="c" style="left:343px;top:30px;width:107px;letter-spacing:0.03px">fastEthernet1/0.1...</div>
<div class="c" style="left:453px;top:30px;width:107px;letter-spacing:0.1px">fe-0/3/0.112:112</div>
<div class="c" style="left:563px;top:30px;width:68px;letter-spacing:0.074px">ethernet-vlan</div>
<div style="left:0px;top:60px;width:632px;height:1px;background:#999"></div>
<div class="c" style="left:1px;top:46px;width:67px;letter-spacing:0.326px">_114</div>
<div class="c" style="left:71px;top:46px;width:32px;letter-spacing:0.326px">114</div>
<div class="c" style="left:106px;top:46px;width:117px;letter-spacing:-0.077px">ERX:EDGE1</div>
<div class="c" style="left:226px;top:46px;width:114px;letter-spacing:0.047px">ROUTERB</div>
<div class="c" style="left:343px;top:46px;width:107px;letter-spacing:0.03px">fastEthernet1/0.1...</div>
<div class="c" style="left:453px;top:46px;width:107px;letter-spacing:0.229px">bridge114:</div>
<div class="c" style="left:563px;top:46px;width:68px;letter-spacing:0.074px">ethernet-vlan</div>
<div style="left:0px;top:76px;width:632px;height:1px;background:#999"></div>
<div class="c" style="left:1px;top:62px;width:67px;letter-spacing:0.326px">116</div>
<div class="c" style="left:71px;top:62px;width:32px;letter-spacing:0.326px">116</div>
<div class="c" style="left:106px;top:62px;width:117px;letter-spacing:-0.077px">ERX:EDGE1</div>
<div class="c" style="left:226px;top:62px;width:114px;letter-spacing:0.109px">RSTN_B</div>
<div class="c" style="left:343px;top:62px;width:107px;letter-spacing:0.03px">fastEthernet1/0.1...</div>
<div class="c" style="left:453px;top:62px;width:107px;letter-spacing:0.062px">et.1.1:116</div>
<div class="c" style="left:563px;top:62px;width:68px;letter-spacing:0.074px">ethernet-vlan</div>
<div style="left:0px;top:92px;width:632px;height:1px;background:#999"></div>
<div class="c" style="left:1px;top:78px;width:67px;letter-spacing:0.326px">117</div>
<div class="c" style="left:71px;top:78px;width:32px;letter-spacing:0.326px">117</div>
<div class="c" style="left:106px;top:78px;width:117px;letter-spacing:-0.077px">ERX:EDGE1</div>
<div class="c" style="left:343px;top:78px;width:107px;letter-spacing:0.03px">fastEthernet1/0.1...</div>
<div class="c" style="left:563px;top:78px;width:68px;letter-spacing:0.074px">ethernet-vlan</div>
<div style="left:0px;top:108px;width:632px;height:1px;background:#999"></div>
<div class="c" style="left:1px;top:94px;width:67px;letter-spacing:0.326px">124_</div>
<div class="c" style="left:71px;top:94px;width:32px;letter-spacing:0.326px">124</div>
<div class="c" style="left:106px;top:94px;width:117px;letter-spacing:0.047px">ROUTERB</div>
<div class="c" style="left:226px;top:94px;width:114px;letter-spacing:0.021px">JUNIPER_EDGE_A</div>
<div class="c" style="left:343px;top:94px;width:107px;letter-spacing:0.229px">bridge124:</div>
<div class="c" style="left:453px;top:94px;width:107px;letter-spacing:0.1px">fe-0/0/0.124:124</div>
<div style="left:0px;top:124px;width:632px;height:1px;background:#999"></div>
<div class="c" style="left:1px;top:110px;width:67px;letter-spacing:0.326px">164_</div>
<div class="c" style="left:71px;top:110px;width:32px;letter-spacing:0.326px">164</div>
<div class="c" style="left:106px;top:110px;width:117px;letter-spacing:0.047px">ROUTERB</div>
<div class="c" style="left:226px;top:110px;width:114px;letter-spacing:-0.057px">RSTN_A</div>
<div class="c" style="left:343px;top:110px;width:107px;letter-spacing:0.229px">bridge164:</div>
<div class="c" style="left:453px;top:110px;width:107px;letter-spacing:0.062px">et.1.1:164</div>
<div style="left:0px;top:140px;width:632px;height:1px;background:#999"></div>
<div class="c" style="left:1px;top:126px;width:67px;letter-spacing:0.326px">174</div>
<div class="c" style="left:71px;top:126px;width:32px;letter-spacing:0.326px">174</div>
<div class="c" style="left:106px;top:126px;width:117px;letter-spacing:0.047px">ROUTERB</div>
<div class="c" style="left:343px;top:126px;width:107px;letter-spacing:0.229px">bridge174:</div>
<div style="left:0px;top:156px;width:632px;height:1px;background:#999"></div>
<div class="c" style="left:1px;top:142px;width:67px;letter-spacing:0.326px">121</div>
<div class="c" style="left:71px;top:142px;width:32px;letter-spacing:0.326px">121</div>
<div class="c" style="left:106px;top:142px;width:117px;letter-spacing:0.021px">JUNIPER_EDGE_A</div>
<div class="c" style="left:226px;top:142px;width:114px;letter-spacing:-0.077px">ERX:EDGE2</div>
<div class="c" style="left:343px;top:142px;width:107px;letter-spacing:0.1px">fe-0/0/0.121:121</div>
<div class="c" style="left:453px;top:142px;width:107px;letter-spacing:0.03px">fastEthernet1/1.1...</div>
<div class="c" style="left:563px;top:142px;width:68px;letter-spacing:-0.001px">vlan-ccc</div>
<div style="left:0px;top:172px;width:632px;height:1px;background:#999"></div>
<div class="c" style="left:1px;top:158px;width:67px;letter-spacing:0.326px">122</div>
<div class="c" style="left:71px;top:158px;width:32px;letter-spacing:0.326px">122</div>
<div class="c" style="left:106px;top:158px;width:117px;letter-spacing:0.021px">JUNIPER_EDGE_A</div>
<div class="c" style="left:226px;top:158px;width:114px;letter-spacing:0.093px">JUNIPER_EDGE_B</div>
<div class="c" style="left:343px;top:158px;width:107px;letter-spacing:0.1px">fe-0/0/0.122:122</div>
<div class="c" style="left:453px;top:158px;width:107px;letter-spacing:0.1px">fe-0/3/0.122:122</div>
<div class="c" style="left:563px;top:158px;width:68px;letter-spacing:-0.001px">vlan-ccc</div>
<div style="left:0px;top:188px;width:632px;height:1px;background:#999"></div>
<div class="c" style="left:1px;top:174px;width:67px;letter-spacing:0.326px">126</div>
<div class="c" style="left:71px;top:174px;width:32px;letter-spacing:0.326px">126</div>
<div class="c" style="left:106px;top:174px;width:117px;letter-spacing:0.021px">JUNIPER_EDGE_A</div>
<div class="c" style="left:226px;top:174px;width:114px;letter-spacing:0.109px">RSTN_B</div>
<div class="c" style="left:343px;top:174px;width:107px;letter-spacing:0.1px">fe-0/0/0.126:126</div>
<div class="c" style="left:453px;top:174px;width:107px;letter-spacing:0.062px">et.1.1:126</div>
<div class="c" style="left:563px;top:174px;width:68px;letter-spacing:-0.001px">vlan-ccc</div>
<div style="left:0px;top:204px;width:632px;height:1px;background:#999"></div>
<div class="c" style="left:1px;top:190px;width:67px;letter-spacing:0.326px">127</div>
<div class="c" style="left:71px;top:190px;width:32px;letter-spacing:0.326px">127</div>
<div class="c" style="left:106px;top:190px;width:117px;letter-spacing:0.021px">JUNIPER_EDGE_A</div>
<div class="c" style="left:343px;top:190px;width:107px;letter-spacing:0.1px">fe-0/0/0.127:127</div>
<div class="c" style="left:563px;top:190px;width:68px;letter-spacing:-0.001px">vlan-ccc</div>
<div style="left:0px;top:220px;width:632px;height:1px;background:#999"></div>
<div class="c" style="left:1px;top:206px;width:67px;letter-spacing:0.326px">162</div>
<div class="c" style="left:71px;top:206px;width:32px;letter-spacing:0.326px">162</div>
<div class="c" style="left:106px;top:206px;width:117px;letter-spacing:0.093px">JUNIPER_EDGE_B</div>
<div class="c" style="left:226px;top:206px;width:114px;letter-spacing:-0.057px">RSTN_A</div>
<div class="c" style="left:343px;top:206px;width:107px;letter-spacing:0.1px">fe-0/3/0.162:162</div>
<div class="c" style="left:453px;top:206px;width:107px;letter-spacing:0.062px">et.1.1:162</div>
<div class="c" style="left:563px;top:206px;width:68px;letter-spacing:-0.001px">vlan-ccc</div>
<div style="left:0px;top:236px;width:632px;height:1px;background:#999"></div>
<div class="c" style="left:1px;top:222px;width:67px;letter-spacing:0.326px">172</div>
<div class="c" style="left:71px;top:222px;width:32px;letter-spacing:0.326px">172</div>
<div class="c" style="left:106px;top:222px;width:117px;letter-spacing:0.093px">JUNIPER_EDGE_B</div>
<div class="c" style="left:343px;top:222px;width:107px;letter-spacing:0.1px">fe-0/3/0.172:172</div>
<div class="c" style="left:563px;top:222px;width:68px;letter-spacing:-0.001px">vlan-ccc</div>
<div style="left:0px;top:252px;width:632px;height:1px;background:#999"></div>
<div class="c" style="left:1px;top:238px;width:67px;letter-spacing:0.326px">161</div>
<div class="c" style="left:71px;top:238px;width:32px;letter-spacing:0.326px">161</div>
<div class="c" style="left:106px;top:238px;width:117px;letter-spacing:-0.057px">RSTN_A</div>
<div class="c" style="left:226px;top:238px;width:114px;letter-spacing:-0.077px">ERX:EDGE2</div>
<div class="c" style="left:343px;top:238px;width:107px;letter-spacing:0.062px">et.1.1:161</div>
<div class="c" style="left:453px;top:238px;width:107px;letter-spacing:0.03px">fastEthernet1/1.1...</div>
<div class="c" style="left:563px;top:238px;width:68px;letter-spacing:0.074px">ethernet-vlan</div>
<div style="left:0px;top:268px;width:632px;height:1px;background:#999"></div>
<div class="c" style="left:1px;top:254px;width:67px;letter-spacing:0.326px">163</div>
<div class="c" style="left:71px;top:254px;width:32px;letter-spacing:0.326px">163</div>
<div class="c" style="left:106px;top:254px;width:117px;letter-spacing:-0.057px">RSTN_A</div>
<div class="c" style="left:343px;top:254px;width:107px;letter-spacing:0.062px">et.1.1:163</div>
<div class="c" style="left:563px;top:254px;width:68px;letter-spacing:0.074px">ethernet-vlan</div>
<div style="left:0px;top:284px;width:632px;height:1px;background:#999"></div>
<div class="c" style="left:1px;top:270px;width:67px;letter-spacing:0.326px">165</div>
<div class="c" style="left:71px;top:270px;width:32px;letter-spacing:0.326px">165</div>
<div class="c" style="left:106px;top:270px;width:117px;letter-spacing:-0.057px">RSTN_A</div>
<div class="c" style="left:343px;top:270px;width:107px;letter-spacing:0.062px">et.1.1:165</div>
<div class="c" style="left:563px;top:270px;width:68px;letter-spacing:0.074px">ethernet-vlan</div>
<div style="left:0px;top:300px;width:632px;height:1px;background:#999"></div>
<div class="c" style="left:1px;top:286px;width:67px;letter-spacing:0.326px">166</div>
<div class="c" style="left:71px;top:286px;width:32px;letter-spacing:0.326px">166</div>
<div class="c" style="left:106px;top:286px;width:117px;letter-spacing:-0.057px">RSTN_A</div>
<div class="c" style="left:226px;top:286px;width:114px;letter-spacing:0.109px">RSTN_B</div>
<div class="c" style="left:343px;top:286px;width:107px;letter-spacing:0.062px">et.1.1:166</div>
<div class="c" style="left:453px;top:286px;width:107px;letter-spacing:0.062px">et.1.1:166</div>
<div class="c" style="left:563px;top:286px;width:68px;letter-spacing:0.074px">ethernet-vlan</div>
<div style="left:0px;top:316px;width:632px;height:1px;background:#999"></div>
<div class="c" style="left:1px;top:302px;width:67px;letter-spacing:0.326px">167</div>
<div class="c" style="left:71px;top:302px;width:32px;letter-spacing:0.326px">167</div>
<div class="c" style="left:106px;top:302px;width:117px;letter-spacing:-0.057px">RSTN_A</div>
<div class="c" style="left:343px;top:302px;width:107px;letter-spacing:0.062px">et.1.1:167</div>
<div class="c" style="left:563px;top:302px;width:68px;letter-spacing:0.074px">ethernet-vlan</div>
<div style="left:0px;top:332px;width:632px;height:1px;background:#999"></div>
<div class="c" style="left:1px;top:318px;width:67px;letter-spacing:0.326px">176</div>
<div class="c" style="left:71px;top:318px;width:32px;letter-spacing:0.326px">176</div>
<div class="c" style="left:106px;top:318px;width:117px;letter-spacing:0.109px">RSTN_B</div>
<div class="c" style="left:343px;top:318px;width:107px;letter-spacing:0.062px">et.1.1:176</div>
<div class="c" style="left:563px;top:318px;width:68px;letter-spacing:0.074px">ethernet-vlan</div>
<div style="left:0px;top:348px;width:632px;height:1px;background:#999"></div>
<div class="c" style="left:1px;top:334px;width:67px;letter-spacing:0.326px">171</div>
<div class="c" style="left:71px;top:334px;width:32px;letter-spacing:0.326px">171</div>
<div class="c" style="left:106px;top:334px;width:117px;letter-spacing:-0.077px">ERX:EDGE2</div>
<div class="c" style="left:343px;top:334px;width:107px;letter-spacing:0.03px">fastEthernet1/1.1...</div>
<div class="c" style="left:563px;top:334px;width:68px;letter-spacing:0.074px">ethernet-vlan</div>
<div style="left:0px;top:364px;width:632px;height:1px;background:#999"></div>
<div class="c" style="left:1px;top:350px;width:67px;letter-spacing:0.326px">99</div>
<div class="c" style="left:71px;top:350px;width:32px;letter-spacing:0.326px">99</div>
<div class="c" style="left:106px;top:350px;width:117px;letter-spacing:0.021px">JUNIPER_EDGE_A</div>
<div class="c" style="left:226px;top:350px;width:114px;letter-spacing:0.093px">JUNIPER_EDGE_B</div>
<div class="c" style="left:343px;top:350px;width:107px;letter-spacing:0.117px">ge-1/1/0.99</div>
<div class="c" style="left:453px;top:350px;width:107px;letter-spacing:0.117px">ge-1/1/0.99</div>
<div class="c" style="left:563px;top:350px;width:68px;letter-spacing:0.074px">ethernet-vlan</div>
<div style="left:0px;top:380px;width:632px;height:1px;background:#999"></div>
<div class="c" style="left:1px;top:366px;width:67px;letter-spacing:0.118px">L2Martini_1</div>
<div class="c" style="left:71px;top:366px;width:32px;letter-spacing:0.326px">98</div>
<div class="c" style="left:106px;top:366px;width:117px;letter-spacing:0.021px">JUNIPER_EDGE_A</div>
<div class="c" style="left:226px;top:366px;width:114px;letter-spacing:0.093px">JUNIPER_EDGE_B</div>
<div class="c" style="left:343px;top:366px;width:107px;letter-spacing:0.117px">ge-1/1/0.98</div>
<div class="c" style="left:453px;top:366px;width:107px;letter-spacing:0.117px">ge-1/1/0.98</div>
<div class="c" style="left:563px;top:366px;width:68px;letter-spacing:0.074px">ethernet-vlan</div>
<div style="left:69px;top:0px;width:1px;height:381px;background:#999"></div>
<div style="left:104px;top:0px;width:1px;height:381px;background:#999"></div>
<div style="left:224px;top:0px;width:1px;height:381px;background:#999"></div>
<div style="left:341px;top:0px;width:1px;height:381px;background:#999"></div>
<div style="left:451px;top:0px;width:1px;height:381px;background:#999"></div>
<div style="left:561px;top:0px;width:1px;height:381px;background:#999"></div>
</div>
<div style="left:901px;top:89px;width:14px;height:381px;background:#eee"></div>
<div style="left:901px;top:104px;width:1px;height:352px;background:#c8c8c8"></div>
<div style="left:901px;top:90px;width:14px;height:14px;background:linear-gradient(90deg,#ffffff 0%,#f6f6f6 12%,#ededed 45%,#dddddd 75%,#cdcdcd 100%)"></div>
<div style="left:901px;top:104px;width:14px;height:1px;background:#7a7a7a"></div>
<svg style="left:904px;top:94px" width="8" height="4" shape-rendering="crispEdges"><rect x="3" y="0" width="2" height="1"/><rect x="2" y="1" width="4" height="1"/><rect x="1" y="2" width="6" height="1"/><rect x="0" y="3" width="8" height="1"/></svg>
<div style="left:900px;top:157px;width:15px;height:298px;background:linear-gradient(90deg,#d4dcf2 0%,#d4dcf2 7%,#b6c9de 8%,#a6bad2 50%,#90a8c5 100%);border:1px solid #6f92b8;border-right:none"></div>
<div style="left:901px;top:158px;width:14px;height:1px;background:#d4dcf2"></div>
<svg style="left:903px;top:161px" width="11" height="290" shape-rendering="crispEdges"><defs><pattern id="tp" width="4" height="4" patternUnits="userSpaceOnUse"><rect x="1" y="1" width="1" height="1" fill="#7690b4"/><rect x="3" y="3" width="1" height="1" fill="#7690b4"/><rect x="0" y="0" width="1" height="1" fill="#becee6"/><rect x="2" y="2" width="1" height="1" fill="#becee6"/></pattern></defs><rect width="11" height="291" fill="url(#tp)"/></svg>
<div style="left:901px;top:455px;width:14px;height:14px;background:linear-gradient(90deg,#ffffff 0%,#f6f6f6 12%,#ededed 45%,#dddddd 75%,#cdcdcd 100%)"></div>
<div style="left:901px;top:455px;width:14px;height:1px;background:#fff"></div>
<svg style="left:904px;top:461px" width="8" height="4" shape-rendering="crispEdges"><rect x="0" y="0" width="8" height="1"/><rect x="1" y="1" width="6" height="1"/><rect x="2" y="2" width="4" height="1"/><rect x="3" y="3" width="2" height="1"/></svg>
<div style="left:901px;top:469px;width:14px;height:1px;background:#7a7a7a"></div>
<div style="left:268px;top:470px;width:647px;height:1px;background:#7a7a7a"></div>
<div style="left:268px;top:471px;width:633px;height:14px;background:#eee"></div>
<div style="left:268px;top:471px;width:15px;height:14px;background:linear-gradient(#ffffff 0%,#f6f6f6 12%,#ededed 45%,#dddddd 75%,#cdcdcd 100%)"></div>
<svg style="left:273px;top:474px" width="4" height="8" shape-rendering="crispEdges"><rect x="3" y="0" width="1" height="8"/><rect x="2" y="1" width="1" height="6"/><rect x="1" y="2" width="1" height="4"/><rect x="0" y="3" width="1" height="2"/></svg>
<div style="left:283px;top:470px;width:427px;height:15px;background:linear-gradient(#d4dcf2 0%,#d4dcf2 7%,#b6c9de 8%,#a6bad2 50%,#90a8c5 100%);border:1px solid #6f92b8;border-bottom:none"></div>
<div style="left:710px;top:471px;width:1px;height:14px;background:#8a8a8a"></div>
<svg style="left:287px;top:473px" width="420" height="11" shape-rendering="crispEdges"><rect width="420" height="11" fill="url(#tp)"/></svg>
<div style="left:885px;top:471px;width:1px;height:14px;background:#7a7a7a"></div>
<div style="left:886px;top:471px;width:14px;height:14px;background:linear-gradient(#ffffff 0%,#f6f6f6 12%,#ededed 45%,#dddddd 75%,#cdcdcd 100%)"></div>
<svg style="left:891px;top:474px" width="4" height="8" shape-rendering="crispEdges"><rect x="0" y="0" width="1" height="8"/><rect x="1" y="1" width="1" height="6"/><rect x="2" y="2" width="1" height="4"/><rect x="3" y="3" width="1" height="2"/></svg>
<div style="left:900px;top:470px;width:1px;height:15px;background:#7a7a7a"></div>
<div style="left:268px;top:486px;width:647px;height:1px;background:#fff"></div>
<div class="t" style="left:278px;top:494px;letter-spacing:0.0px;">Filter:</div>
<div style="left:505px;top:490px;width:1px;height:20px;background:#fff"></div>
<div style="left:308px;top:509px;width:198px;height:1px;background:#fff"></div>
<div style="left:308px;top:490px;width:197px;height:19px;border:1px solid #6e6e6e;background:#fff"><div class="t" style="left:2px;top:3px;letter-spacing:0.33px;">*</div></div>
<div style="left:607px;top:487px;width:1px;height:26px;background:#fff"></div>
<div style="left:506px;top:512px;width:102px;height:1px;background:#fff"></div>
<div style="left:506px;top:487px;width:101px;height:25px;border:1px solid #6e6e6e;background:linear-gradient(#f0f0f0 0%,#eeeeee 10%,#eeeeee 52%,#dfdfdf 66%,#d8d8de 78%,#d8d8e0 88%,#e2e2e8 100%)"><div style="left:0;top:0;width:100%;height:1px;background:#fff"></div><div style="left:0;top:0;width:1px;height:100%;background:#fff"></div><svg style="left:21px;top:4px" width="17" height="16"><path d="M0.5 0.5 H8.5 L12.5 4.5 V15 H0.5 Z" fill="#fff" stroke="#8a8a8a"/><path d="M8.5 0.5 V4.5 H12.5" fill="#f4f4f4" stroke="#8a8a8a"/><path d="M12.5 5 V15" stroke="#000"/><path d="M1 15 H13" stroke="#000" stroke-width="2"/><path d="M3 2.5 H7 M3 4.5 H7 M3 6.5 H6 M3 8.5 H5 M3 10.5 H5 M3 12.5 H6" stroke="#999"/><circle cx="10" cy="9" r="3.4" fill="#fff" stroke="#0c0c90" stroke-width="1.5"/><rect x="8" y="7" width="2" height="3" fill="#30e8ff"/><path d="M12.6 11.6 L15 14" stroke="#0c0c90" stroke-width="2.6" stroke-linecap="round"/></svg><div class="t" style="left:41px;top:6px;letter-spacing:0.163px;">Search</div></div>
<div style="left:708px;top:487px;width:1px;height:26px;background:#fff"></div>
<div style="left:608px;top:512px;width:101px;height:1px;background:#fff"></div>
<div style="left:608px;top:487px;width:100px;height:25px;border:1px solid #6e6e6e;background:linear-gradient(#f0f0f0 0%,#eeeeee 10%,#eeeeee 52%,#dfdfdf 66%,#d8d8de 78%,#d8d8e0 88%,#e2e2e8 100%)"><div style="left:0;top:0;width:100%;height:1px;background:#fff"></div><div style="left:0;top:0;width:1px;height:100%;background:#fff"></div><div class="t" style="left:20px;top:6px;letter-spacing:-0.206px;">Adv Filter...</div></div>
<div class="t" style="left:728px;top:494px;letter-spacing:0.12px;">1 ~ 28 displayed (1/1 page)</div>
<div style="left:271px;top:521px;width:55px;height:21px;border:1px solid #9a9a9a;background:linear-gradient(#f0f0f0 0%,#eeeeee 10%,#eeeeee 52%,#dfdfdf 66%,#d8d8de 78%,#d8d8e0 88%,#e2e2e8 100%)"><svg style="left:20px;top:4px" width="15" height="13"><path d="M7 0 V13 L0 6.5 Z M14.5 0 V13 L7.5 6.5 Z" fill="#7c7c7c"/></svg></div>
<div style="left:327px;top:521px;width:48px;height:21px;border:1px solid #9a9a9a;background:linear-gradient(#f0f0f0 0%,#eeeeee 10%,#eeeeee 52%,#dfdfdf 66%,#d8d8de 78%,#d8d8e0 88%,#e2e2e8 100%)"><svg style="left:20px;top:4px" width="8" height="13"><path d="M7.5 0 V13 L0.5 6.5 Z" fill="#7c7c7c"/></svg></div>
<div style="left:376px;top:521px;width:48px;height:21px;border:1px solid #9a9a9a;background:linear-gradient(#f0f0f0 0%,#eeeeee 10%,#eeeeee 52%,#dfdfdf 66%,#d8d8de 78%,#d8d8e0 88%,#e2e2e8 100%)"><svg style="left:20px;top:4px" width="8" height="13"><path d="M0.5 0 V13 L7.5 6.5 Z" fill="#7c7c7c"/></svg></div>
<div style="left:425px;top:521px;width:55px;height:21px;border:1px solid #9a9a9a;background:linear-gradient(#f0f0f0 0%,#eeeeee 10%,#eeeeee 52%,#dfdfdf 66%,#d8d8de 78%,#d8d8e0 88%,#e2e2e8 100%)"><svg style="left:20px;top:4px" width="15" height="13"><path d="M0.5 0 V13 L7.5 6.5 Z M8 0 V13 L15 6.5 Z" fill="#7c7c7c"/></svg></div>
<div class="t" style="left:502px;top:526px;letter-spacing:0.062px;">Go to page</div>
<div style="left:625px;top:522px;width:1px;height:20px;background:#fff"></div>
<div style="left:569px;top:541px;width:57px;height:1px;background:#fff"></div>
<div style="left:569px;top:522px;width:56px;height:19px;border:1px solid #8c8c8c;background:#eee"></div>
<div style="left:625px;top:519px;width:58px;height:25px;border:1px solid #9a9a9a;background:linear-gradient(#f0f0f0 0%,#eeeeee 10%,#eeeeee 52%,#dfdfdf 66%,#d8d8de 78%,#d8d8e0 88%,#e2e2e8 100%)"><div class="t" style="left:19px;top:6px;letter-spacing:-0.004px;color:#999">Go</div></div>
<div class="t" style="left:703px;top:526px;letter-spacing:0.21px;">Lines Per Page</div>
<div style="left:851px;top:522px;width:1px;height:20px;background:#fff"></div>
<div style="left:796px;top:541px;width:56px;height:1px;background:#fff"></div>
<div style="left:796px;top:522px;width:55px;height:19px;border:1px solid #6e6e6e;background:#fff"><div class="t" style="left:1px;top:3px;letter-spacing:0.326px;">200</div></div>
<div style="left:911px;top:519px;width:1px;height:26px;background:#fff"></div>
<div style="left:852px;top:544px;width:60px;height:1px;background:#fff"></div>
<div style="left:852px;top:519px;width:59px;height:25px;border:1px solid #6e6e6e;background:linear-gradient(#f0f0f0 0%,#eeeeee 10%,#eeeeee 52%,#dfdfdf 66%,#d8d8de 78%,#d8d8e0 88%,#e2e2e8 100%)"><div style="left:0;top:0;width:100%;height:1px;background:#fff"></div><div style="left:0;top:0;width:1px;height:100%;background:#fff"></div><div class="t" style="left:20px;top:6px;letter-spacing:-0.004px;">Set</div></div>
</div></body></html>
